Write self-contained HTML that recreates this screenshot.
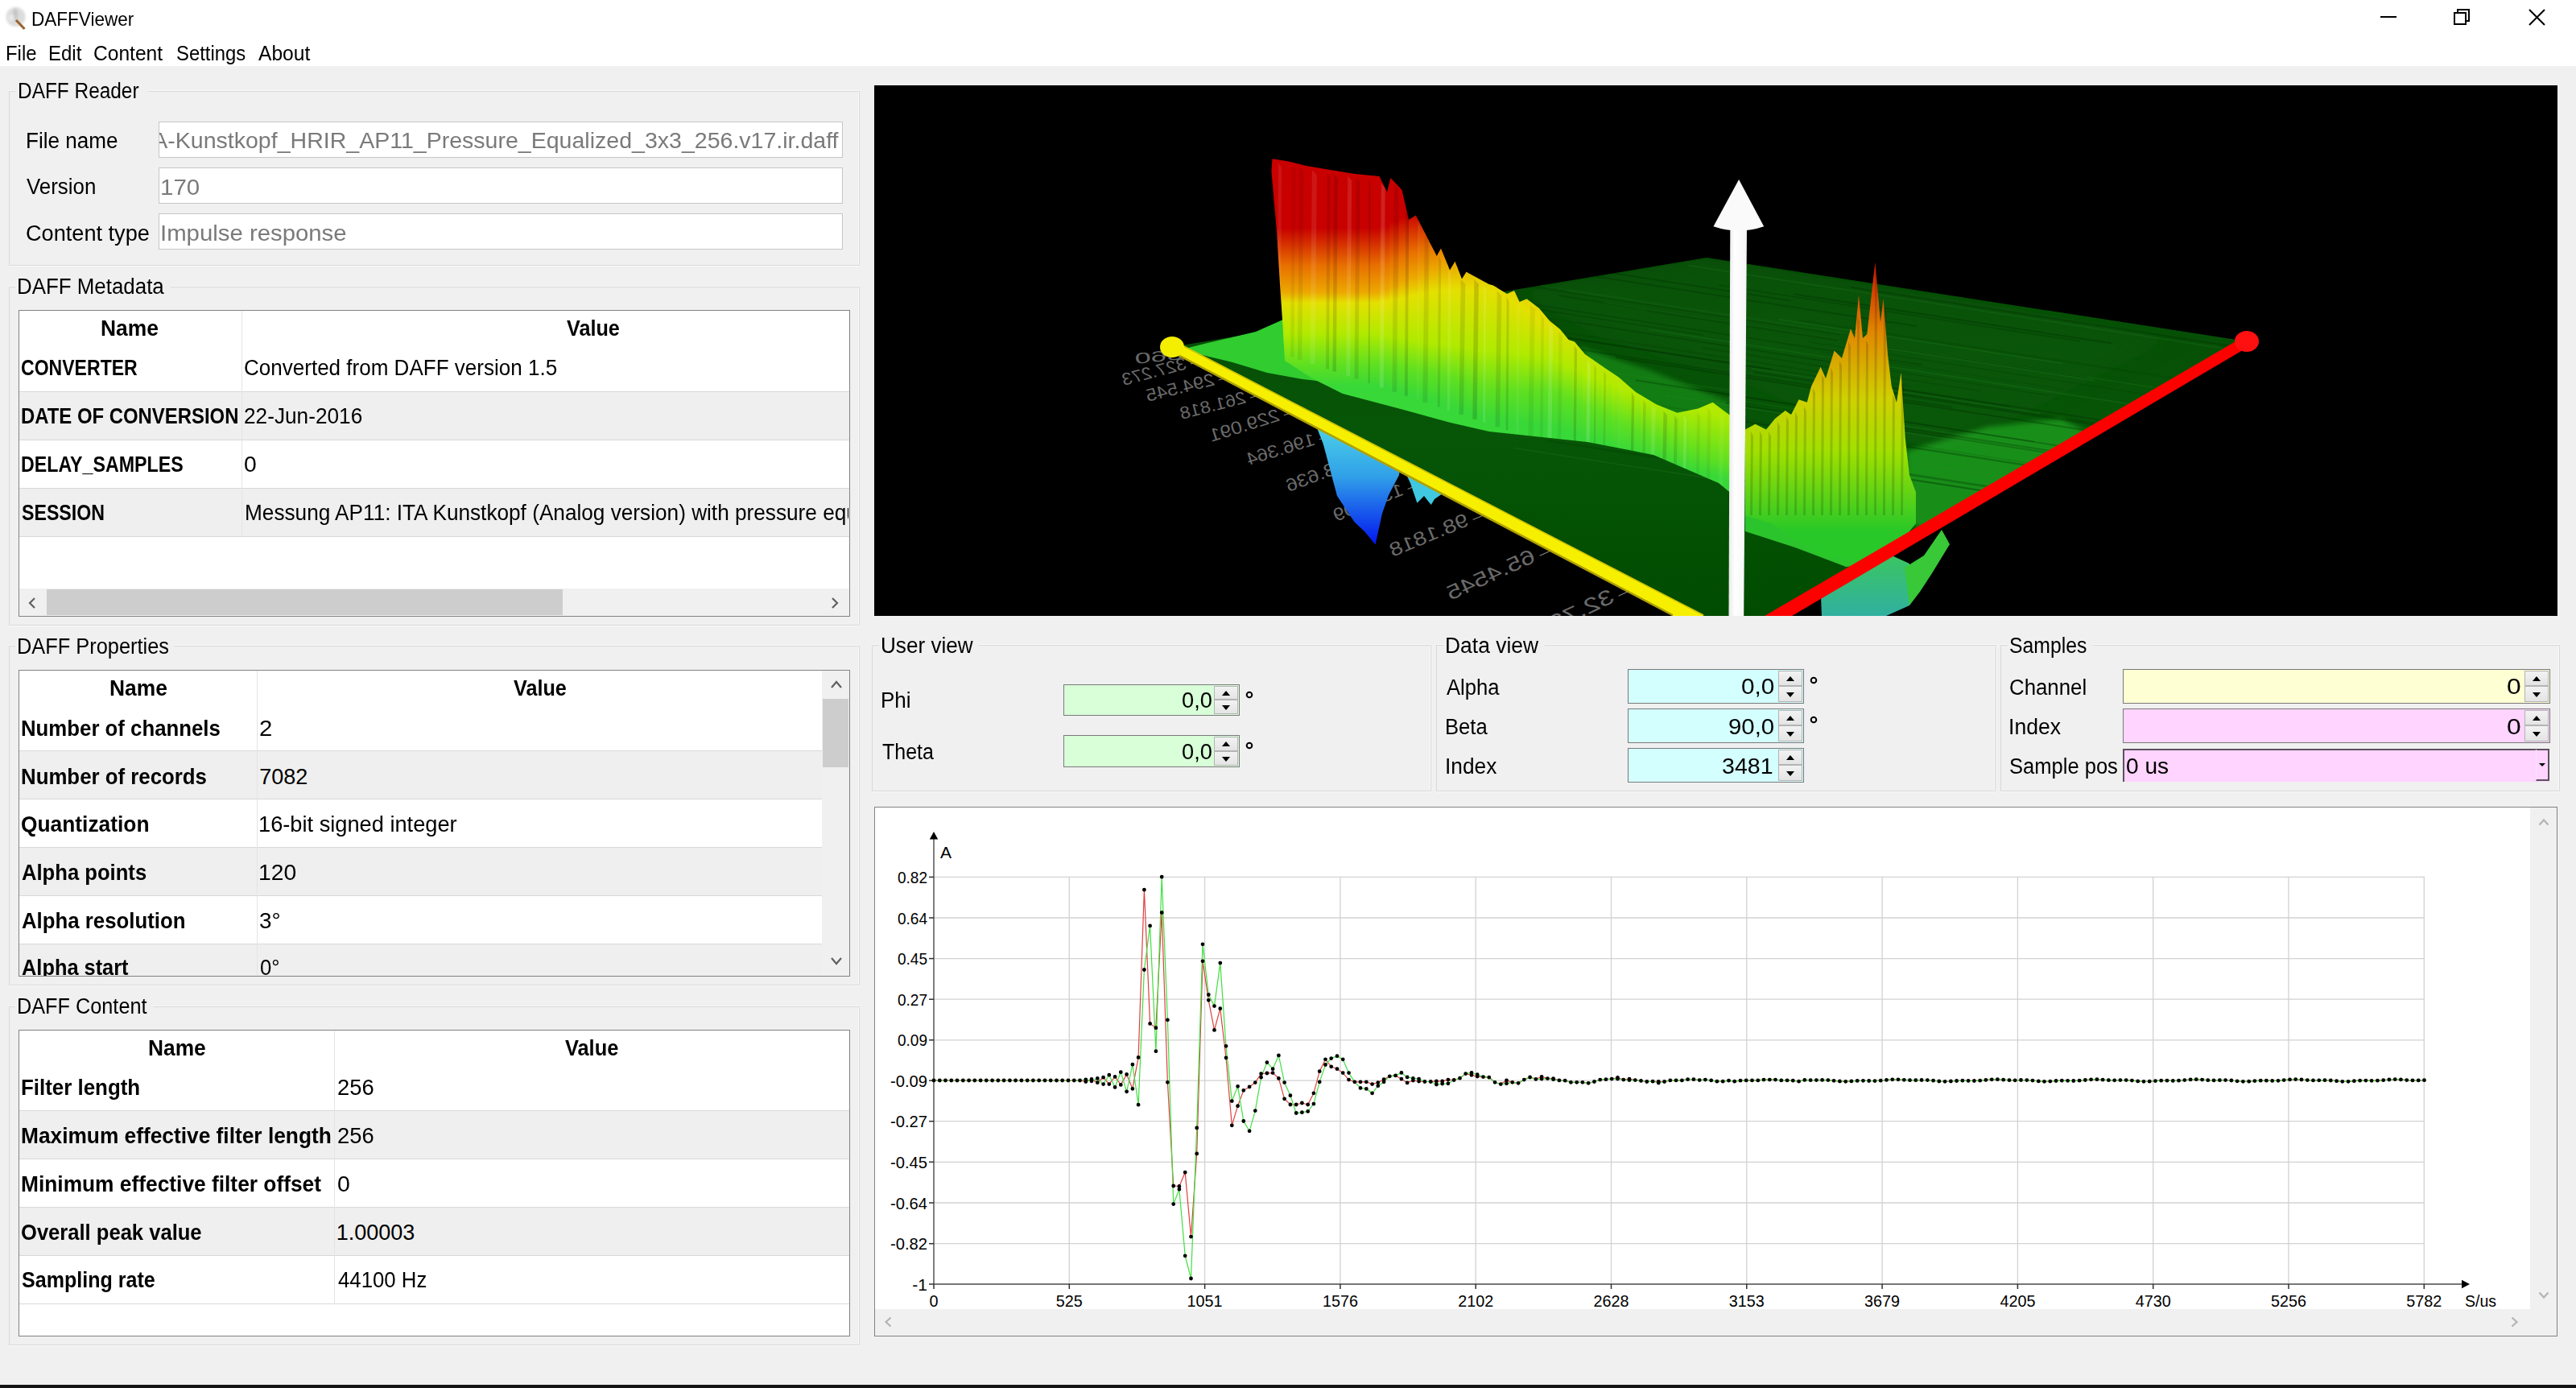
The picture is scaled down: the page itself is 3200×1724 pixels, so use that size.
<!DOCTYPE html>
<html><head><meta charset="utf-8"><title>DAFFViewer</title><style>
*{margin:0;padding:0;box-sizing:border-box}
html,body{width:3200px;height:1724px;overflow:hidden;background:#f0f0f0}
body{position:relative;font-family:"Liberation Sans",sans-serif;color:#000}
.a{position:absolute}
.t{position:absolute;white-space:nowrap;line-height:1;transform-origin:0 0}
.gb{position:absolute;border:1px solid #d8d8d8;box-shadow:inset -1px 0 0 #fafafa, 0 -1px 0 #fafafa, 0 1px 0 #fafafa}
.tb{position:absolute;background:#fff;border:1px solid #828282}
.sep{position:absolute;background:#d8d8d8}
.gr{position:absolute;background:#efefef}
.inp{position:absolute;background:#fff;border:1px solid #c6c6c6}
.spin{position:absolute;border:1px solid #7a7a7a}
.sb{position:absolute;border:1px solid #b4b4b4;background:linear-gradient(#f2f2f2,#e4e4e4)}
</style></head>
<body>
<div class="a" style="left:0px;top:0px;width:3200px;height:82px;background:#fff"></div><svg class="a" style="left:0px;top:0px" width="44" height="44" viewBox="0 0 44 44">
<defs><filter id="icb" x="-30%" y="-30%" width="160%" height="160%"><feGaussianBlur stdDeviation="1.6"/></filter></defs>
<g filter="url(#icb)"><circle cx="19.5" cy="21" r="12" fill="#dcdcdc"/><ellipse cx="19" cy="18" rx="3" ry="8" fill="#c4c4c4"/><circle cx="14" cy="22" r="4" fill="#e8e8e8"/></g>
<line x1="20" y1="25" x2="30.5" y2="36" stroke="#9a6430" stroke-width="3.2"/>
</svg><div class="a" style="left:2957px;top:20px;width:20px;height:2px;background:#000"></div><svg class="a" style="left:3046px;top:9px" width="26" height="26" viewBox="0 0 26 26"><rect x="3" y="7" width="14" height="14" fill="none" stroke="#000" stroke-width="2"/><path d="M7 7 V3 H21 V17 H17" fill="none" stroke="#000" stroke-width="2"/></svg><svg class="a" style="left:3139px;top:9px" width="26" height="26" viewBox="0 0 26 26"><path d="M3 3 L22 22 M22 3 L3 22" stroke="#000" stroke-width="2"/></svg><div class="gb" style="left:11px;top:113px;width:1057px;height:217px;"></div><div class="a" style="left:19px;top:111px;width:165px;height:5px;background:#f0f0f0"></div><div class="gb" style="left:11px;top:356px;width:1057px;height:421px;"></div><div class="a" style="left:19px;top:354px;width:193px;height:5px;background:#f0f0f0"></div><div class="gb" style="left:11px;top:802px;width:1057px;height:422px;"></div><div class="a" style="left:19px;top:800px;width:197px;height:5px;background:#f0f0f0"></div><div class="gb" style="left:11px;top:1250px;width:1057px;height:421px;"></div><div class="a" style="left:19px;top:1248px;width:171px;height:5px;background:#f0f0f0"></div><div class="inp" style="left:197px;top:151px;width:850px;height:45px;"></div><div class="inp" style="left:197px;top:208px;width:850px;height:45px;"></div><div class="inp" style="left:197px;top:265px;width:850px;height:45px;"></div><div class="a" style="left:198px;top:152px;width:848px;height:43px;overflow:hidden">
<div class="t" style="left:-32px;top:9.3px;font-size:28px;color:#7a7a7a;transform:scaleX(1.019)">ITA-Kunstkopf_HRIR_AP11_Pressure_Equalized_3x3_256.v17.ir.daff</div></div><div class="a" style="left:23px;top:385px;width:1033px;height:381px;background:#fff"></div><div class="sep" style="left:24px;top:486px;width:1031px;height:1px;"></div><div class="gr" style="left:24px;top:487px;width:1031px;height:60px;"></div><div class="sep" style="left:24px;top:546px;width:1031px;height:1px;"></div><div class="sep" style="left:24px;top:606px;width:1031px;height:1px;"></div><div class="gr" style="left:24px;top:607px;width:1031px;height:60px;"></div><div class="sep" style="left:24px;top:666px;width:1031px;height:1px;"></div><div class="a" style="left:300px;top:386px;width:1px;height:281px;background:#e4e4e4"></div><div class="a" style="left:23px;top:385px;width:1033px;height:381px;border:1px solid #828282"></div><div class="a" style="left:301px;top:607px;width:753px;height:59px;overflow:hidden">
<div class="t" style="left:3px;top:17.1px;font-size:27px;transform:scaleX(0.97)">Messung AP11: ITA Kunstkopf (Analog version) with pressure equalization</div></div><div class="a" style="left:24px;top:731px;width:1031px;height:34px;background:#f0f0f0"></div><div class="a" style="left:58px;top:732px;width:641px;height:32px;background:#cdcdcd"></div><svg class="a" style="left:33px;top:741px" width="14" height="16" viewBox="0 0 14 16"><path d="M10 2 L4 8 L10 14" fill="none" stroke="#606060" stroke-width="2.2"/></svg><svg class="a" style="left:1030px;top:741px" width="14" height="16" viewBox="0 0 14 16"><path d="M4 2 L10 8 L4 14" fill="none" stroke="#606060" stroke-width="2.2"/></svg><div class="a" style="left:23px;top:832px;width:1033px;height:381px;background:#fff"></div><div class="sep" style="left:24px;top:932px;width:997px;height:1px;"></div><div class="gr" style="left:24px;top:933px;width:997px;height:60px;"></div><div class="sep" style="left:24px;top:992px;width:997px;height:1px;"></div><div class="sep" style="left:24px;top:1052px;width:997px;height:1px;"></div><div class="gr" style="left:24px;top:1053px;width:997px;height:60px;"></div><div class="sep" style="left:24px;top:1112px;width:997px;height:1px;"></div><div class="sep" style="left:24px;top:1172px;width:997px;height:1px;"></div><div class="gr" style="left:24px;top:1173px;width:997px;height:39px;"></div><div class="a" style="left:319px;top:833px;width:1px;height:379px;background:#e4e4e4"></div><div class="a" style="left:23px;top:832px;width:1033px;height:381px;border:1px solid #828282"></div><div class="a" style="left:24px;top:1173px;width:996px;height:39px;overflow:hidden">
<div class="t" style="left:3.3px;top:16.1px;font-size:27px;font-weight:700;transform:scaleX(0.94)">Alpha start</div>
<div class="t" style="left:298.5px;top:16.1px;font-size:27px;transform:scaleX(0.95)">0°</div></div><div class="a" style="left:1021px;top:833px;width:34px;height:379px;background:#f0f0f0"></div><div class="a" style="left:1022px;top:868px;width:32px;height:85px;background:#cdcdcd"></div><svg class="a" style="left:1031px;top:844px" width="16" height="12" viewBox="0 0 16 12"><path d="M2 10 L8 3 L14 10" fill="none" stroke="#606060" stroke-width="2.2"/></svg><svg class="a" style="left:1031px;top:1188px" width="16" height="12" viewBox="0 0 16 12"><path d="M2 2 L8 9 L14 2" fill="none" stroke="#606060" stroke-width="2.2"/></svg><div class="a" style="left:23px;top:1279px;width:1033px;height:381px;background:#fff"></div><div class="sep" style="left:24px;top:1379px;width:1031px;height:1px;"></div><div class="gr" style="left:24px;top:1380px;width:1031px;height:60px;"></div><div class="sep" style="left:24px;top:1439px;width:1031px;height:1px;"></div><div class="sep" style="left:24px;top:1499px;width:1031px;height:1px;"></div><div class="gr" style="left:24px;top:1500px;width:1031px;height:60px;"></div><div class="sep" style="left:24px;top:1559px;width:1031px;height:1px;"></div><div class="sep" style="left:24px;top:1619px;width:1031px;height:1px;"></div><div class="a" style="left:415px;top:1280px;width:1px;height:340px;background:#e4e4e4"></div><div class="a" style="left:23px;top:1279px;width:1033px;height:381px;border:1px solid #828282"></div><svg class="a" style="left:1086px;top:106px" width="2091" height="659" viewBox="1086 106 2091 659" font-family="Liberation Sans, sans-serif">
<defs>
<linearGradient id="wallg" gradientUnits="userSpaceOnUse" x1="1713" y1="200" x2="1689.2" y2="498.1">
<stop offset="0" stop-color="#c00000"/><stop offset="0.277" stop-color="#d41000"/>
<stop offset="0.333" stop-color="#e03800"/><stop offset="0.41" stop-color="#e87000"/>
<stop offset="0.543" stop-color="#e8b800"/><stop offset="0.6" stop-color="#e4dc00"/>
<stop offset="0.677" stop-color="#b4ea00"/><stop offset="0.81" stop-color="#64e018"/>
<stop offset="0.917" stop-color="#3cdc3c"/><stop offset="1" stop-color="#30d030"/>
</linearGradient>
<linearGradient id="spkg" gradientUnits="userSpaceOnUse" x1="0" y1="330" x2="0" y2="660">
<stop offset="0" stop-color="#d01800"/><stop offset="0.25" stop-color="#e08800"/>
<stop offset="0.5" stop-color="#d0d000"/><stop offset="0.7" stop-color="#a0e000"/>
<stop offset="1" stop-color="#28c828"/>
</linearGradient>
<linearGradient id="blueg" gradientUnits="userSpaceOnUse" x1="0" y1="520" x2="0" y2="680">
<stop offset="0" stop-color="#50d8e8"/><stop offset="0.45" stop-color="#30a0e8"/>
<stop offset="1" stop-color="#0010f0"/>
</linearGradient>
<linearGradient id="tealg" gradientUnits="userSpaceOnUse" x1="0" y1="650" x2="0" y2="765">
<stop offset="0" stop-color="#40d040"/><stop offset="1" stop-color="#30b0a0"/>
</linearGradient>
<linearGradient id="planeg" gradientUnits="userSpaceOnUse" x1="0" y1="320" x2="0" y2="765">
<stop offset="0" stop-color="#064a06"/><stop offset="0.5" stop-color="#075607"/><stop offset="1" stop-color="#004c00"/>
</linearGradient>
<linearGradient id="arrg" gradientUnits="userSpaceOnUse" x1="2147" y1="0" x2="2170" y2="0">
<stop offset="0" stop-color="#e8e8e8"/><stop offset="0.35" stop-color="#ffffff"/><stop offset="1" stop-color="#f4f4f4"/>
</linearGradient>
<filter id="bl" x="-20%" y="-20%" width="140%" height="140%"><feGaussianBlur stdDeviation="10"/></filter>
<filter id="bl2" x="-20%" y="-20%" width="140%" height="140%"><feGaussianBlur stdDeviation="3"/></filter>
<clipPath id="pc"><polygon points="1456,431 2120,320 2791,424 2209,765 2097,765"/></clipPath>
</defs>
<rect x="1086" y="106" width="2091" height="659" fill="#000"/>
<text transform="translate(1470,446) rotate(-5.7) scale(-1,1)" font-size="18.6" fill="#6a6a6a" textLength="60" lengthAdjust="spacingAndGlyphs">360</text>
<line x1="1474.0" y1="440.6" x2="1501.8" y2="437.8" stroke="#808080" stroke-width="1.2"/>
<text transform="translate(1475,458) rotate(-14.9) scale(-1,1)" font-size="21.2" fill="#6a6a6a" textLength="82" lengthAdjust="spacingAndGlyphs">327.273</text>
<line x1="1478.9" y1="452.0" x2="1505.9" y2="444.8" stroke="#808080" stroke-width="1.2"/>
<text transform="translate(1510,478) rotate(-14.0) scale(-1,1)" font-size="21.8" fill="#6a6a6a" textLength="87" lengthAdjust="spacingAndGlyphs">294.545</text>
<line x1="1513.9" y1="472.0" x2="1541.0" y2="465.2" stroke="#808080" stroke-width="1.2"/>
<text transform="translate(1549,500) rotate(-14.5) scale(-1,1)" font-size="21.4" fill="#6a6a6a" textLength="84" lengthAdjust="spacingAndGlyphs">261.818</text>
<line x1="1552.9" y1="494.0" x2="1580.0" y2="487.0" stroke="#808080" stroke-width="1.2"/>
<text transform="translate(1591,522) rotate(-17.4) scale(-1,1)" font-size="22.2" fill="#6a6a6a" textLength="90" lengthAdjust="spacingAndGlyphs">229.091</text>
<line x1="1594.8" y1="515.8" x2="1621.5" y2="507.4" stroke="#808080" stroke-width="1.2"/>
<text transform="translate(1635,552) rotate(-17.2) scale(-1,1)" font-size="22.0" fill="#6a6a6a" textLength="88" lengthAdjust="spacingAndGlyphs">196.364</text>
<line x1="1638.8" y1="545.8" x2="1665.6" y2="537.5" stroke="#808080" stroke-width="1.2"/>
<text transform="translate(1687,579) rotate(-20.4) scale(-1,1)" font-size="22.4" fill="#6a6a6a" textLength="92" lengthAdjust="spacingAndGlyphs">163.636</text>
<line x1="1690.7" y1="572.6" x2="1717.0" y2="562.8" stroke="#808080" stroke-width="1.2"/>
<text transform="translate(1745,614) rotate(-21.6) scale(-1,1)" font-size="22.5" fill="#6a6a6a" textLength="92" lengthAdjust="spacingAndGlyphs">130.909</text>
<line x1="1748.7" y1="607.5" x2="1774.8" y2="597.2" stroke="#808080" stroke-width="1.2"/>
<text transform="translate(1826,652) rotate(-22.6) scale(-1,1)" font-size="23.9" fill="#6a6a6a" textLength="104" lengthAdjust="spacingAndGlyphs">98.1818</text>
<line x1="1829.7" y1="645.5" x2="1855.5" y2="634.7" stroke="#808080" stroke-width="1.2"/>
<text transform="translate(1909,697) rotate(-24.6) scale(-1,1)" font-size="25.5" fill="#6a6a6a" textLength="118" lengthAdjust="spacingAndGlyphs">65.4545</text>
<line x1="1912.6" y1="690.3" x2="1938.1" y2="678.7" stroke="#808080" stroke-width="1.2"/>
<text transform="translate(2007,747) rotate(-25.3) scale(-1,1)" font-size="26.3" fill="#6a6a6a" textLength="124" lengthAdjust="spacingAndGlyphs">32.7273</text>
<line x1="2010.6" y1="740.3" x2="2035.9" y2="728.3" stroke="#808080" stroke-width="1.2"/>
<polygon points="1456.0,431.0 2120.0,320.0 2791.0,424.0 2209.0,765.0 2097.0,765.0" fill="url(#planeg)"/>
<g clip-path="url(#pc)">
<polygon points="1884.0,362.0 2120.0,321.0 2500.0,383.0 2700.0,420.0 2600.0,470.0 2420.0,560.0 2300.0,530.0 2150.0,470.0 1990.0,420.0" fill="#0a5a0a" opacity="0.5" filter="url(#bl)"/>
<polygon points="1960.0,430.0 2050.0,460.0 2150.0,500.0 2150.0,585.0 2110.0,572.0 2005.0,549.0 1969.0,440.0" fill="#1c9a1c" opacity="0.6" filter="url(#bl2)"/>
<polygon points="2368.0,560.0 2470.0,530.0 2560.0,520.0 2600.0,540.0 2450.0,640.0 2400.0,660.0 2368.0,650.0" fill="#22a822" opacity="0.7" filter="url(#bl2)"/>
<line x1="2097" y1="329.7" x2="2760" y2="432.3" stroke="#2a8a2a" stroke-width="1.8" opacity="0.19"/>
<line x1="1925" y1="334.5" x2="2381" y2="405.2" stroke="#002800" stroke-width="2.2" opacity="0.23"/>
<line x1="1980" y1="335.6" x2="2225" y2="373.6" stroke="#002800" stroke-width="2.0" opacity="0.26"/>
<line x1="2292" y1="339.3" x2="2974" y2="445.0" stroke="#002800" stroke-width="1.9" opacity="0.23"/>
<line x1="1847" y1="343.9" x2="2311" y2="415.9" stroke="#2a8a2a" stroke-width="1.3" opacity="0.11"/>
<line x1="1854" y1="348.5" x2="2286" y2="415.4" stroke="#002800" stroke-width="2.3" opacity="0.19"/>
<line x1="2135" y1="354.1" x2="2584" y2="423.8" stroke="#002800" stroke-width="1.7" opacity="0.23"/>
<line x1="2299" y1="356.7" x2="2997" y2="464.8" stroke="#002800" stroke-width="2.1" opacity="0.27"/>
<line x1="1946" y1="360.9" x2="2290" y2="414.3" stroke="#2a8a2a" stroke-width="2.1" opacity="0.11"/>
<line x1="2229" y1="365.4" x2="2623" y2="426.4" stroke="#002800" stroke-width="2.3" opacity="0.29"/>
<line x1="1936" y1="367.0" x2="2592" y2="468.5" stroke="#002800" stroke-width="2.5" opacity="0.19"/>
<line x1="1874" y1="373.4" x2="2388" y2="453.2" stroke="#002800" stroke-width="1.4" opacity="0.26"/>
<line x1="1993" y1="375.5" x2="2675" y2="481.2" stroke="#2a8a2a" stroke-width="1.2" opacity="0.25"/>
<line x1="1886" y1="380.5" x2="2116" y2="416.1" stroke="#002800" stroke-width="1.3" opacity="0.26"/>
<line x1="2046" y1="386.4" x2="2341" y2="432.1" stroke="#002800" stroke-width="1.2" opacity="0.25"/>
<line x1="1894" y1="390.9" x2="2304" y2="454.5" stroke="#002800" stroke-width="1.4" opacity="0.14"/>
<line x1="2210" y1="396.8" x2="2562" y2="451.4" stroke="#2a8a2a" stroke-width="1.3" opacity="0.28"/>
<line x1="2233" y1="397.4" x2="2754" y2="478.1" stroke="#002800" stroke-width="2.5" opacity="0.12"/>
<line x1="1959" y1="400.3" x2="2545" y2="491.2" stroke="#002800" stroke-width="1.4" opacity="0.17"/>
<line x1="1881" y1="403.4" x2="2373" y2="479.6" stroke="#002800" stroke-width="1.9" opacity="0.15"/>
<line x1="2048" y1="409.2" x2="2728" y2="514.6" stroke="#2a8a2a" stroke-width="1.9" opacity="0.20"/>
<line x1="1924" y1="416.2" x2="2201" y2="459.1" stroke="#002800" stroke-width="2.2" opacity="0.28"/>
<line x1="1927" y1="416.5" x2="2497" y2="504.8" stroke="#002800" stroke-width="1.3" opacity="0.29"/>
<line x1="2246" y1="424.7" x2="2748" y2="502.5" stroke="#002800" stroke-width="1.2" opacity="0.18"/>
<line x1="2283" y1="423.2" x2="2602" y2="472.7" stroke="#2a8a2a" stroke-width="1.4" opacity="0.24"/>
<line x1="2114" y1="431.9" x2="2461" y2="485.7" stroke="#002800" stroke-width="2.1" opacity="0.14"/>
<line x1="1945" y1="431.4" x2="2425" y2="505.8" stroke="#002800" stroke-width="1.9" opacity="0.27"/>
<line x1="2262" y1="436.7" x2="2564" y2="483.5" stroke="#002800" stroke-width="1.4" opacity="0.10"/>
<line x1="1868" y1="441.7" x2="2156" y2="486.3" stroke="#2a8a2a" stroke-width="1.9" opacity="0.17"/>
<line x1="2007" y1="443.8" x2="2652" y2="543.8" stroke="#002800" stroke-width="2.0" opacity="0.30"/>
<line x1="2109" y1="451.1" x2="2379" y2="493.0" stroke="#002800" stroke-width="1.0" opacity="0.11"/>
<line x1="2162" y1="456.5" x2="2844" y2="562.1" stroke="#002800" stroke-width="2.0" opacity="0.10"/>
<line x1="2176" y1="457.9" x2="2535" y2="513.6" stroke="#2a8a2a" stroke-width="1.1" opacity="0.30"/>
<line x1="2179" y1="462.3" x2="2829" y2="563.0" stroke="#002800" stroke-width="2.1" opacity="0.25"/>
<line x1="2261" y1="467.8" x2="2637" y2="526.0" stroke="#002800" stroke-width="2.4" opacity="0.24"/>
<line x1="2032" y1="472.2" x2="2627" y2="564.5" stroke="#002800" stroke-width="1.9" opacity="0.27"/>
<line x1="2016" y1="474.7" x2="2507" y2="550.9" stroke="#2a8a2a" stroke-width="1.1" opacity="0.22"/>
<line x1="2297" y1="478.8" x2="2937" y2="578.0" stroke="#002800" stroke-width="1.6" opacity="0.25"/>
<line x1="2107" y1="483.4" x2="2527" y2="548.6" stroke="#002800" stroke-width="1.1" opacity="0.27"/>
<line x1="1854" y1="487.5" x2="2354" y2="565.1" stroke="#002800" stroke-width="1.3" opacity="0.20"/>
<line x1="2069" y1="491.2" x2="2576" y2="569.8" stroke="#2a8a2a" stroke-width="1.4" opacity="0.28"/>
<line x1="1978" y1="491.1" x2="2518" y2="574.6" stroke="#002800" stroke-width="1.3" opacity="0.14"/>
<line x1="2144" y1="500.4" x2="2565" y2="565.7" stroke="#002800" stroke-width="1.5" opacity="0.28"/>
<line x1="1931" y1="503.0" x2="2347" y2="567.4" stroke="#002800" stroke-width="2.4" opacity="0.26"/>
<line x1="2017" y1="508.3" x2="2508" y2="584.5" stroke="#2a8a2a" stroke-width="1.2" opacity="0.16"/>
<line x1="2225" y1="510.0" x2="2849" y2="606.8" stroke="#002800" stroke-width="2.4" opacity="0.24"/>
<line x1="1918" y1="512.7" x2="2343" y2="578.6" stroke="#002800" stroke-width="1.3" opacity="0.16"/>
<line x1="2128" y1="517.5" x2="2575" y2="586.8" stroke="#002800" stroke-width="2.3" opacity="0.16"/>
<line x1="2048" y1="524.9" x2="2285" y2="561.7" stroke="#2a8a2a" stroke-width="2.3" opacity="0.11"/>
<line x1="2166" y1="523.2" x2="2651" y2="598.5" stroke="#002800" stroke-width="2.2" opacity="0.16"/>
<line x1="1903" y1="527.1" x2="2330" y2="593.4" stroke="#002800" stroke-width="2.2" opacity="0.10"/>
<line x1="1905" y1="532.4" x2="2128" y2="567.1" stroke="#002800" stroke-width="1.7" opacity="0.23"/>
<line x1="2141" y1="538.8" x2="2745" y2="632.4" stroke="#2a8a2a" stroke-width="2.0" opacity="0.29"/>
<line x1="2059" y1="540.2" x2="2348" y2="585.0" stroke="#002800" stroke-width="1.7" opacity="0.10"/>
<line x1="1922" y1="547.3" x2="2259" y2="599.4" stroke="#002800" stroke-width="2.0" opacity="0.17"/>
<line x1="2123" y1="550.1" x2="2701" y2="639.7" stroke="#002800" stroke-width="2.2" opacity="0.18"/>
<line x1="1880" y1="556.4" x2="2546" y2="659.7" stroke="#2a8a2a" stroke-width="1.2" opacity="0.24"/>
<line x1="2128" y1="557.7" x2="2783" y2="659.2" stroke="#002800" stroke-width="1.9" opacity="0.18"/>
<line x1="2207" y1="564.3" x2="2879" y2="668.5" stroke="#002800" stroke-width="2.0" opacity="0.19"/>
<line x1="2172" y1="564.2" x2="2781" y2="658.7" stroke="#002800" stroke-width="2.1" opacity="0.23"/>
</g>
<polygon points="2168.0,605.0 2220.0,600.0 2300.0,598.0 2368.0,600.0 2380.0,640.0 2340.0,700.0 2293.0,704.0 2230.0,680.0 2168.0,660.0" fill="#2cc42c"/>
<polygon points="1468.0,434.0 1500.0,426.0 1560.0,412.0 1596.0,396.0 1610.0,440.0 1645.0,474.0 1618.0,471.0 1574.0,463.0 1531.0,450.0 1481.0,438.0" fill="#30cc30"/>
<clipPath id="wallclip"><polygon points="1580.5,197.3 1601.0,200.5 1622.7,206.0 1681.0,215.7 1713.5,219.0 1723.0,238.4 1727.5,221.0 1741.5,236.0 1750.0,273.0 1758.8,267.5 1784.8,318.0 1790.0,308.6 1801.0,335.6 1807.5,324.8 1816.0,346.5 1821.5,337.8 1849.6,353.0 1855.0,354.5 1872.0,365.0 1881.0,361.0 1887.6,375.0 1896.7,371.3 1912.0,383.0 1925.0,398.6 1938.0,409.0 1948.6,422.0 1956.0,424.5 1969.0,440.0 1995.0,458.0 2010.8,468.6 2031.6,486.8 2057.5,502.3 2083.5,512.7 2109.4,507.5 2127.6,499.7 2148.3,515.3 2152.0,520.0 2152.0,614.0 2135.0,600.0 2054.0,565.0 1972.0,549.0 1850.0,536.0 1802.0,525.0 1740.0,508.0 1668.0,489.0 1630.0,470.0 1596.0,448.0 1593.5,404.8 1590.0,353.0 1586.0,288.0 1579.4,212.4"/></clipPath>
<g clip-path="url(#wallclip)">
<linearGradient id="ws0" gradientUnits="userSpaceOnUse" x1="0" y1="180" x2="0" y2="620"><stop offset="0.2341" stop-color="#c80000"/><stop offset="0.3409" stop-color="#e87000"/><stop offset="0.4159" stop-color="#eca800"/><stop offset="0.4455" stop-color="#e4e000"/><stop offset="0.5341" stop-color="#b0ea00"/><stop offset="0.6182" stop-color="#60e020"/><stop offset="0.6818" stop-color="#38d838"/></linearGradient>
<rect x="1570" y="180" width="12.6" height="440" fill="url(#ws0)"/>
<linearGradient id="ws1" gradientUnits="userSpaceOnUse" x1="0" y1="180" x2="0" y2="620"><stop offset="0.2341" stop-color="#c80000"/><stop offset="0.3409" stop-color="#e87000"/><stop offset="0.4159" stop-color="#eca800"/><stop offset="0.4455" stop-color="#e4e000"/><stop offset="0.5341" stop-color="#b0ea00"/><stop offset="0.6182" stop-color="#60e020"/><stop offset="0.6818" stop-color="#38d838"/></linearGradient>
<rect x="1582" y="180" width="12.6" height="440" fill="url(#ws1)"/>
<linearGradient id="ws2" gradientUnits="userSpaceOnUse" x1="0" y1="180" x2="0" y2="620"><stop offset="0.2341" stop-color="#c80000"/><stop offset="0.3409" stop-color="#e87000"/><stop offset="0.4159" stop-color="#eca800"/><stop offset="0.4455" stop-color="#e4e000"/><stop offset="0.5341" stop-color="#b0ea00"/><stop offset="0.6182" stop-color="#60e020"/><stop offset="0.6818" stop-color="#38d838"/></linearGradient>
<rect x="1594" y="180" width="12.6" height="440" fill="url(#ws2)"/>
<linearGradient id="ws3" gradientUnits="userSpaceOnUse" x1="0" y1="180" x2="0" y2="620"><stop offset="0.2341" stop-color="#c80000"/><stop offset="0.3409" stop-color="#e87000"/><stop offset="0.4159" stop-color="#eca800"/><stop offset="0.4455" stop-color="#e4e000"/><stop offset="0.5341" stop-color="#b0ea00"/><stop offset="0.6182" stop-color="#60e020"/><stop offset="0.6818" stop-color="#38d838"/></linearGradient>
<rect x="1606" y="180" width="12.6" height="440" fill="url(#ws3)"/>
<linearGradient id="ws4" gradientUnits="userSpaceOnUse" x1="0" y1="180" x2="0" y2="620"><stop offset="0.2341" stop-color="#c80000"/><stop offset="0.3409" stop-color="#e87000"/><stop offset="0.4159" stop-color="#eca800"/><stop offset="0.4455" stop-color="#e4e000"/><stop offset="0.5341" stop-color="#b0ea00"/><stop offset="0.6182" stop-color="#60e020"/><stop offset="0.6818" stop-color="#38d838"/></linearGradient>
<rect x="1618" y="180" width="12.6" height="440" fill="url(#ws4)"/>
<linearGradient id="ws5" gradientUnits="userSpaceOnUse" x1="0" y1="180" x2="0" y2="620"><stop offset="0.2341" stop-color="#c80000"/><stop offset="0.3409" stop-color="#e87000"/><stop offset="0.4159" stop-color="#eca800"/><stop offset="0.4455" stop-color="#e4e000"/><stop offset="0.5341" stop-color="#b0ea00"/><stop offset="0.6182" stop-color="#60e020"/><stop offset="0.6818" stop-color="#38d838"/></linearGradient>
<rect x="1630" y="180" width="12.6" height="440" fill="url(#ws5)"/>
<linearGradient id="ws6" gradientUnits="userSpaceOnUse" x1="0" y1="180" x2="0" y2="620"><stop offset="0.2341" stop-color="#c80000"/><stop offset="0.3409" stop-color="#e87000"/><stop offset="0.4159" stop-color="#eca800"/><stop offset="0.4455" stop-color="#e4e000"/><stop offset="0.5341" stop-color="#b0ea00"/><stop offset="0.6182" stop-color="#60e020"/><stop offset="0.6818" stop-color="#38d838"/></linearGradient>
<rect x="1642" y="180" width="12.6" height="440" fill="url(#ws6)"/>
<linearGradient id="ws7" gradientUnits="userSpaceOnUse" x1="0" y1="180" x2="0" y2="620"><stop offset="0.2341" stop-color="#c80000"/><stop offset="0.3409" stop-color="#e87000"/><stop offset="0.4159" stop-color="#eca800"/><stop offset="0.4455" stop-color="#e4e000"/><stop offset="0.5341" stop-color="#b0ea00"/><stop offset="0.6182" stop-color="#60e020"/><stop offset="0.6818" stop-color="#38d838"/></linearGradient>
<rect x="1654" y="180" width="12.6" height="440" fill="url(#ws7)"/>
<linearGradient id="ws8" gradientUnits="userSpaceOnUse" x1="0" y1="180" x2="0" y2="620"><stop offset="0.2341" stop-color="#c80000"/><stop offset="0.3409" stop-color="#e87000"/><stop offset="0.4159" stop-color="#eca800"/><stop offset="0.4455" stop-color="#e4e000"/><stop offset="0.5341" stop-color="#b0ea00"/><stop offset="0.6182" stop-color="#60e020"/><stop offset="0.6818" stop-color="#38d838"/></linearGradient>
<rect x="1666" y="180" width="12.6" height="440" fill="url(#ws8)"/>
<linearGradient id="ws9" gradientUnits="userSpaceOnUse" x1="0" y1="180" x2="0" y2="620"><stop offset="0.2341" stop-color="#c80000"/><stop offset="0.3409" stop-color="#e87000"/><stop offset="0.4159" stop-color="#eca800"/><stop offset="0.4455" stop-color="#e4e000"/><stop offset="0.5341" stop-color="#b0ea00"/><stop offset="0.6182" stop-color="#60e020"/><stop offset="0.6818" stop-color="#38d838"/></linearGradient>
<rect x="1678" y="180" width="12.6" height="440" fill="url(#ws9)"/>
<linearGradient id="ws10" gradientUnits="userSpaceOnUse" x1="0" y1="180" x2="0" y2="620"><stop offset="0.2341" stop-color="#c80000"/><stop offset="0.3409" stop-color="#e87000"/><stop offset="0.4159" stop-color="#eca800"/><stop offset="0.4455" stop-color="#e4e000"/><stop offset="0.5341" stop-color="#b0ea00"/><stop offset="0.6182" stop-color="#60e020"/><stop offset="0.6818" stop-color="#38d838"/></linearGradient>
<rect x="1690" y="180" width="12.6" height="440" fill="url(#ws10)"/>
<linearGradient id="ws11" gradientUnits="userSpaceOnUse" x1="0" y1="180" x2="0" y2="620"><stop offset="0.2341" stop-color="#c80000"/><stop offset="0.3409" stop-color="#e87000"/><stop offset="0.4159" stop-color="#eca800"/><stop offset="0.4455" stop-color="#e4e000"/><stop offset="0.5341" stop-color="#b0ea00"/><stop offset="0.6182" stop-color="#60e020"/><stop offset="0.6818" stop-color="#38d838"/></linearGradient>
<rect x="1702" y="180" width="12.6" height="440" fill="url(#ws11)"/>
<linearGradient id="ws12" gradientUnits="userSpaceOnUse" x1="0" y1="180" x2="0" y2="620"><stop offset="0.2273" stop-color="#c80000"/><stop offset="0.3347" stop-color="#e87000"/><stop offset="0.4091" stop-color="#eca800"/><stop offset="0.4421" stop-color="#e4e000"/><stop offset="0.5368" stop-color="#b0ea00"/><stop offset="0.6209" stop-color="#60e020"/><stop offset="0.6860" stop-color="#38d838"/></linearGradient>
<rect x="1714" y="180" width="12.6" height="440" fill="url(#ws12)"/>
<linearGradient id="ws13" gradientUnits="userSpaceOnUse" x1="0" y1="180" x2="0" y2="620"><stop offset="0.2156" stop-color="#c80000"/><stop offset="0.3241" stop-color="#e87000"/><stop offset="0.3974" stop-color="#eca800"/><stop offset="0.4365" stop-color="#e4e000"/><stop offset="0.5414" stop-color="#b0ea00"/><stop offset="0.6255" stop-color="#60e020"/><stop offset="0.6930" stop-color="#38d838"/></linearGradient>
<rect x="1726" y="180" width="12.6" height="440" fill="url(#ws13)"/>
<linearGradient id="ws14" gradientUnits="userSpaceOnUse" x1="0" y1="180" x2="0" y2="620"><stop offset="0.2039" stop-color="#c80000"/><stop offset="0.3135" stop-color="#e87000"/><stop offset="0.3857" stop-color="#eca800"/><stop offset="0.4308" stop-color="#e4e000"/><stop offset="0.5460" stop-color="#b0ea00"/><stop offset="0.6301" stop-color="#60e020"/><stop offset="0.7001" stop-color="#38d838"/></linearGradient>
<rect x="1738" y="180" width="12.6" height="440" fill="url(#ws14)"/>
<linearGradient id="ws15" gradientUnits="userSpaceOnUse" x1="0" y1="180" x2="0" y2="620"><stop offset="0.1922" stop-color="#c80000"/><stop offset="0.3028" stop-color="#e87000"/><stop offset="0.3740" stop-color="#eca800"/><stop offset="0.4251" stop-color="#e4e000"/><stop offset="0.5506" stop-color="#b0ea00"/><stop offset="0.6347" stop-color="#60e020"/><stop offset="0.7072" stop-color="#38d838"/></linearGradient>
<rect x="1750" y="180" width="12.6" height="440" fill="url(#ws15)"/>
<linearGradient id="ws16" gradientUnits="userSpaceOnUse" x1="0" y1="180" x2="0" y2="620"><stop offset="0.1805" stop-color="#c80000"/><stop offset="0.2922" stop-color="#e87000"/><stop offset="0.3623" stop-color="#eca800"/><stop offset="0.4195" stop-color="#e4e000"/><stop offset="0.5552" stop-color="#b0ea00"/><stop offset="0.6393" stop-color="#60e020"/><stop offset="0.7143" stop-color="#38d838"/></linearGradient>
<rect x="1762" y="180" width="12.6" height="440" fill="url(#ws16)"/>
<linearGradient id="ws17" gradientUnits="userSpaceOnUse" x1="0" y1="180" x2="0" y2="620"><stop offset="0.1688" stop-color="#c80000"/><stop offset="0.2816" stop-color="#e87000"/><stop offset="0.3506" stop-color="#eca800"/><stop offset="0.4138" stop-color="#e4e000"/><stop offset="0.5598" stop-color="#b0ea00"/><stop offset="0.6439" stop-color="#60e020"/><stop offset="0.7214" stop-color="#38d838"/></linearGradient>
<rect x="1774" y="180" width="12.6" height="440" fill="url(#ws17)"/>
<linearGradient id="ws18" gradientUnits="userSpaceOnUse" x1="0" y1="180" x2="0" y2="620"><stop offset="0.1553" stop-color="#c80000"/><stop offset="0.2712" stop-color="#e87000"/><stop offset="0.3402" stop-color="#eca800"/><stop offset="0.4091" stop-color="#e4e000"/><stop offset="0.5642" stop-color="#b0ea00"/><stop offset="0.6492" stop-color="#60e020"/><stop offset="0.7288" stop-color="#38d838"/></linearGradient>
<rect x="1786" y="180" width="12.6" height="440" fill="url(#ws18)"/>
<linearGradient id="ws19" gradientUnits="userSpaceOnUse" x1="0" y1="180" x2="0" y2="620"><stop offset="0.1326" stop-color="#c80000"/><stop offset="0.2621" stop-color="#e87000"/><stop offset="0.3356" stop-color="#eca800"/><stop offset="0.4091" stop-color="#e4e000"/><stop offset="0.5673" stop-color="#b0ea00"/><stop offset="0.6578" stop-color="#60e020"/><stop offset="0.7379" stop-color="#38d838"/></linearGradient>
<rect x="1798" y="180" width="12.6" height="440" fill="url(#ws19)"/>
<linearGradient id="ws20" gradientUnits="userSpaceOnUse" x1="0" y1="180" x2="0" y2="620"><stop offset="0.1098" stop-color="#c80000"/><stop offset="0.2530" stop-color="#e87000"/><stop offset="0.3311" stop-color="#eca800"/><stop offset="0.4091" stop-color="#e4e000"/><stop offset="0.5705" stop-color="#b0ea00"/><stop offset="0.6664" stop-color="#60e020"/><stop offset="0.7470" stop-color="#38d838"/></linearGradient>
<rect x="1810" y="180" width="12.6" height="440" fill="url(#ws20)"/>
<linearGradient id="ws21" gradientUnits="userSpaceOnUse" x1="0" y1="180" x2="0" y2="620"><stop offset="0.0871" stop-color="#c80000"/><stop offset="0.2439" stop-color="#e87000"/><stop offset="0.3265" stop-color="#eca800"/><stop offset="0.4091" stop-color="#e4e000"/><stop offset="0.5737" stop-color="#b0ea00"/><stop offset="0.6751" stop-color="#60e020"/><stop offset="0.7561" stop-color="#38d838"/></linearGradient>
<rect x="1822" y="180" width="12.6" height="440" fill="url(#ws21)"/>
<linearGradient id="ws22" gradientUnits="userSpaceOnUse" x1="0" y1="180" x2="0" y2="620"><stop offset="0.0644" stop-color="#c80000"/><stop offset="0.2348" stop-color="#e87000"/><stop offset="0.3220" stop-color="#eca800"/><stop offset="0.4091" stop-color="#e4e000"/><stop offset="0.5769" stop-color="#b0ea00"/><stop offset="0.6837" stop-color="#60e020"/><stop offset="0.7652" stop-color="#38d838"/></linearGradient>
<rect x="1834" y="180" width="12.6" height="440" fill="url(#ws22)"/>
<linearGradient id="ws23" gradientUnits="userSpaceOnUse" x1="0" y1="180" x2="0" y2="620"><stop offset="0.0455" stop-color="#c80000"/><stop offset="0.2255" stop-color="#e87000"/><stop offset="0.3170" stop-color="#eca800"/><stop offset="0.4115" stop-color="#e4e000"/><stop offset="0.5801" stop-color="#b0ea00"/><stop offset="0.6910" stop-color="#60e020"/><stop offset="0.7733" stop-color="#38d838"/></linearGradient>
<rect x="1846" y="180" width="12.6" height="440" fill="url(#ws23)"/>
<linearGradient id="ws24" gradientUnits="userSpaceOnUse" x1="0" y1="180" x2="0" y2="620"><stop offset="0.0455" stop-color="#c80000"/><stop offset="0.2147" stop-color="#e87000"/><stop offset="0.3098" stop-color="#eca800"/><stop offset="0.4258" stop-color="#e4e000"/><stop offset="0.5837" stop-color="#b0ea00"/><stop offset="0.6913" stop-color="#60e020"/><stop offset="0.7769" stop-color="#38d838"/></linearGradient>
<rect x="1858" y="180" width="12.6" height="440" fill="url(#ws24)"/>
<linearGradient id="ws25" gradientUnits="userSpaceOnUse" x1="0" y1="180" x2="0" y2="620"><stop offset="0.0455" stop-color="#c80000"/><stop offset="0.2039" stop-color="#e87000"/><stop offset="0.3026" stop-color="#eca800"/><stop offset="0.4402" stop-color="#e4e000"/><stop offset="0.5873" stop-color="#b0ea00"/><stop offset="0.6917" stop-color="#60e020"/><stop offset="0.7805" stop-color="#38d838"/></linearGradient>
<rect x="1870" y="180" width="12.6" height="440" fill="url(#ws25)"/>
<linearGradient id="ws26" gradientUnits="userSpaceOnUse" x1="0" y1="180" x2="0" y2="620"><stop offset="0.0455" stop-color="#c80000"/><stop offset="0.1932" stop-color="#e87000"/><stop offset="0.2955" stop-color="#eca800"/><stop offset="0.4545" stop-color="#e4e000"/><stop offset="0.5909" stop-color="#b0ea00"/><stop offset="0.6920" stop-color="#60e020"/><stop offset="0.7841" stop-color="#38d838"/></linearGradient>
<rect x="1882" y="180" width="12.6" height="440" fill="url(#ws26)"/>
<linearGradient id="ws27" gradientUnits="userSpaceOnUse" x1="0" y1="180" x2="0" y2="620"><stop offset="0.0455" stop-color="#c80000"/><stop offset="0.1824" stop-color="#e87000"/><stop offset="0.2883" stop-color="#eca800"/><stop offset="0.4689" stop-color="#e4e000"/><stop offset="0.5945" stop-color="#b0ea00"/><stop offset="0.6924" stop-color="#60e020"/><stop offset="0.7877" stop-color="#38d838"/></linearGradient>
<rect x="1894" y="180" width="12.6" height="440" fill="url(#ws27)"/>
<linearGradient id="ws28" gradientUnits="userSpaceOnUse" x1="0" y1="180" x2="0" y2="620"><stop offset="0.0455" stop-color="#c80000"/><stop offset="0.1717" stop-color="#e87000"/><stop offset="0.2811" stop-color="#eca800"/><stop offset="0.4833" stop-color="#e4e000"/><stop offset="0.5981" stop-color="#b0ea00"/><stop offset="0.6928" stop-color="#60e020"/><stop offset="0.7913" stop-color="#38d838"/></linearGradient>
<rect x="1906" y="180" width="12.6" height="440" fill="url(#ws28)"/>
<linearGradient id="ws29" gradientUnits="userSpaceOnUse" x1="0" y1="180" x2="0" y2="620"><stop offset="0.0455" stop-color="#c80000"/><stop offset="0.1609" stop-color="#e87000"/><stop offset="0.2739" stop-color="#eca800"/><stop offset="0.4976" stop-color="#e4e000"/><stop offset="0.6017" stop-color="#b0ea00"/><stop offset="0.6931" stop-color="#60e020"/><stop offset="0.7949" stop-color="#38d838"/></linearGradient>
<rect x="1918" y="180" width="12.6" height="440" fill="url(#ws29)"/>
<linearGradient id="ws30" gradientUnits="userSpaceOnUse" x1="0" y1="180" x2="0" y2="620"><stop offset="0.0455" stop-color="#c80000"/><stop offset="0.1554" stop-color="#e87000"/><stop offset="0.2691" stop-color="#eca800"/><stop offset="0.5037" stop-color="#e4e000"/><stop offset="0.6124" stop-color="#b0ea00"/><stop offset="0.7033" stop-color="#60e020"/><stop offset="0.8028" stop-color="#38d838"/></linearGradient>
<rect x="1930" y="180" width="12.6" height="440" fill="url(#ws30)"/>
<linearGradient id="ws31" gradientUnits="userSpaceOnUse" x1="0" y1="180" x2="0" y2="620"><stop offset="0.0455" stop-color="#c80000"/><stop offset="0.1510" stop-color="#e87000"/><stop offset="0.2647" stop-color="#eca800"/><stop offset="0.5081" stop-color="#e4e000"/><stop offset="0.6245" stop-color="#b0ea00"/><stop offset="0.7154" stop-color="#60e020"/><stop offset="0.8116" stop-color="#38d838"/></linearGradient>
<rect x="1942" y="180" width="12.6" height="440" fill="url(#ws31)"/>
<linearGradient id="ws32" gradientUnits="userSpaceOnUse" x1="0" y1="180" x2="0" y2="620"><stop offset="0.0455" stop-color="#c80000"/><stop offset="0.1466" stop-color="#e87000"/><stop offset="0.2603" stop-color="#eca800"/><stop offset="0.5125" stop-color="#e4e000"/><stop offset="0.6365" stop-color="#b0ea00"/><stop offset="0.7275" stop-color="#60e020"/><stop offset="0.8204" stop-color="#38d838"/></linearGradient>
<rect x="1954" y="180" width="12.6" height="440" fill="url(#ws32)"/>
<linearGradient id="ws33" gradientUnits="userSpaceOnUse" x1="0" y1="180" x2="0" y2="620"><stop offset="0.0455" stop-color="#c80000"/><stop offset="0.1422" stop-color="#e87000"/><stop offset="0.2559" stop-color="#eca800"/><stop offset="0.5169" stop-color="#e4e000"/><stop offset="0.6486" stop-color="#b0ea00"/><stop offset="0.7396" stop-color="#60e020"/><stop offset="0.8292" stop-color="#38d838"/></linearGradient>
<rect x="1966" y="180" width="12.6" height="440" fill="url(#ws33)"/>
<linearGradient id="ws34" gradientUnits="userSpaceOnUse" x1="0" y1="180" x2="0" y2="620"><stop offset="0.0455" stop-color="#c80000"/><stop offset="0.1378" stop-color="#e87000"/><stop offset="0.2515" stop-color="#eca800"/><stop offset="0.5213" stop-color="#e4e000"/><stop offset="0.6607" stop-color="#b0ea00"/><stop offset="0.7516" stop-color="#60e020"/><stop offset="0.8380" stop-color="#38d838"/></linearGradient>
<rect x="1978" y="180" width="12.6" height="440" fill="url(#ws34)"/>
<linearGradient id="ws35" gradientUnits="userSpaceOnUse" x1="0" y1="180" x2="0" y2="620"><stop offset="0.0455" stop-color="#c80000"/><stop offset="0.1334" stop-color="#e87000"/><stop offset="0.2471" stop-color="#eca800"/><stop offset="0.5257" stop-color="#e4e000"/><stop offset="0.6728" stop-color="#b0ea00"/><stop offset="0.7637" stop-color="#60e020"/><stop offset="0.8468" stop-color="#38d838"/></linearGradient>
<rect x="1990" y="180" width="12.6" height="440" fill="url(#ws35)"/>
<linearGradient id="ws36" gradientUnits="userSpaceOnUse" x1="0" y1="180" x2="0" y2="620"><stop offset="0.0455" stop-color="#c80000"/><stop offset="0.1290" stop-color="#e87000"/><stop offset="0.2427" stop-color="#eca800"/><stop offset="0.5301" stop-color="#e4e000"/><stop offset="0.6849" stop-color="#b0ea00"/><stop offset="0.7758" stop-color="#60e020"/><stop offset="0.8556" stop-color="#38d838"/></linearGradient>
<rect x="2002" y="180" width="12.6" height="440" fill="url(#ws36)"/>
<linearGradient id="ws37" gradientUnits="userSpaceOnUse" x1="0" y1="180" x2="0" y2="620"><stop offset="0.0455" stop-color="#c80000"/><stop offset="0.1246" stop-color="#e87000"/><stop offset="0.2383" stop-color="#eca800"/><stop offset="0.5345" stop-color="#e4e000"/><stop offset="0.6970" stop-color="#b0ea00"/><stop offset="0.7879" stop-color="#60e020"/><stop offset="0.8644" stop-color="#38d838"/></linearGradient>
<rect x="2014" y="180" width="12.6" height="440" fill="url(#ws37)"/>
<linearGradient id="ws38" gradientUnits="userSpaceOnUse" x1="0" y1="180" x2="0" y2="620"><stop offset="0.0455" stop-color="#c80000"/><stop offset="0.1202" stop-color="#e87000"/><stop offset="0.2339" stop-color="#eca800"/><stop offset="0.5389" stop-color="#e4e000"/><stop offset="0.7091" stop-color="#b0ea00"/><stop offset="0.8000" stop-color="#60e020"/><stop offset="0.8732" stop-color="#38d838"/></linearGradient>
<rect x="2026" y="180" width="12.6" height="440" fill="url(#ws38)"/>
<linearGradient id="ws39" gradientUnits="userSpaceOnUse" x1="0" y1="180" x2="0" y2="620"><stop offset="0.0455" stop-color="#c80000"/><stop offset="0.1158" stop-color="#e87000"/><stop offset="0.2295" stop-color="#eca800"/><stop offset="0.5433" stop-color="#e4e000"/><stop offset="0.7212" stop-color="#b0ea00"/><stop offset="0.8121" stop-color="#60e020"/><stop offset="0.8820" stop-color="#38d838"/></linearGradient>
<rect x="2038" y="180" width="12.6" height="440" fill="url(#ws39)"/>
<linearGradient id="ws40" gradientUnits="userSpaceOnUse" x1="0" y1="180" x2="0" y2="620"><stop offset="0.0455" stop-color="#c80000"/><stop offset="0.1124" stop-color="#e87000"/><stop offset="0.2260" stop-color="#eca800"/><stop offset="0.5467" stop-color="#e4e000"/><stop offset="0.7298" stop-color="#b0ea00"/><stop offset="0.8231" stop-color="#60e020"/><stop offset="0.8901" stop-color="#38d838"/></linearGradient>
<rect x="2050" y="180" width="12.6" height="440" fill="url(#ws40)"/>
<linearGradient id="ws41" gradientUnits="userSpaceOnUse" x1="0" y1="180" x2="0" y2="620"><stop offset="0.0455" stop-color="#c80000"/><stop offset="0.1099" stop-color="#e87000"/><stop offset="0.2236" stop-color="#eca800"/><stop offset="0.5492" stop-color="#e4e000"/><stop offset="0.7347" stop-color="#b0ea00"/><stop offset="0.8331" stop-color="#60e020"/><stop offset="0.8975" stop-color="#38d838"/></linearGradient>
<rect x="2062" y="180" width="12.6" height="440" fill="url(#ws41)"/>
<linearGradient id="ws42" gradientUnits="userSpaceOnUse" x1="0" y1="180" x2="0" y2="620"><stop offset="0.0455" stop-color="#c80000"/><stop offset="0.1074" stop-color="#e87000"/><stop offset="0.2211" stop-color="#eca800"/><stop offset="0.5517" stop-color="#e4e000"/><stop offset="0.7397" stop-color="#b0ea00"/><stop offset="0.8430" stop-color="#60e020"/><stop offset="0.9050" stop-color="#38d838"/></linearGradient>
<rect x="2074" y="180" width="12.6" height="440" fill="url(#ws42)"/>
<linearGradient id="ws43" gradientUnits="userSpaceOnUse" x1="0" y1="180" x2="0" y2="620"><stop offset="0.0455" stop-color="#c80000"/><stop offset="0.1050" stop-color="#e87000"/><stop offset="0.2186" stop-color="#eca800"/><stop offset="0.5541" stop-color="#e4e000"/><stop offset="0.7446" stop-color="#b0ea00"/><stop offset="0.8529" stop-color="#60e020"/><stop offset="0.9124" stop-color="#38d838"/></linearGradient>
<rect x="2086" y="180" width="12.6" height="440" fill="url(#ws43)"/>
<linearGradient id="ws44" gradientUnits="userSpaceOnUse" x1="0" y1="180" x2="0" y2="620"><stop offset="0.0455" stop-color="#c80000"/><stop offset="0.1025" stop-color="#e87000"/><stop offset="0.2161" stop-color="#eca800"/><stop offset="0.5566" stop-color="#e4e000"/><stop offset="0.7496" stop-color="#b0ea00"/><stop offset="0.8628" stop-color="#60e020"/><stop offset="0.9198" stop-color="#38d838"/></linearGradient>
<rect x="2098" y="180" width="12.6" height="440" fill="url(#ws44)"/>
<linearGradient id="ws45" gradientUnits="userSpaceOnUse" x1="0" y1="180" x2="0" y2="620"><stop offset="0.0455" stop-color="#c80000"/><stop offset="0.1000" stop-color="#e87000"/><stop offset="0.2136" stop-color="#eca800"/><stop offset="0.5591" stop-color="#e4e000"/><stop offset="0.7545" stop-color="#b0ea00"/><stop offset="0.8727" stop-color="#60e020"/><stop offset="0.9273" stop-color="#38d838"/></linearGradient>
<rect x="2110" y="180" width="12.6" height="440" fill="url(#ws45)"/>
<linearGradient id="ws46" gradientUnits="userSpaceOnUse" x1="0" y1="180" x2="0" y2="620"><stop offset="0.0455" stop-color="#c80000"/><stop offset="0.0975" stop-color="#e87000"/><stop offset="0.2112" stop-color="#eca800"/><stop offset="0.5616" stop-color="#e4e000"/><stop offset="0.7595" stop-color="#b0ea00"/><stop offset="0.8826" stop-color="#60e020"/><stop offset="0.9347" stop-color="#38d838"/></linearGradient>
<rect x="2122" y="180" width="12.6" height="440" fill="url(#ws46)"/>
<linearGradient id="ws47" gradientUnits="userSpaceOnUse" x1="0" y1="180" x2="0" y2="620"><stop offset="0.0455" stop-color="#c80000"/><stop offset="0.0950" stop-color="#e87000"/><stop offset="0.2087" stop-color="#eca800"/><stop offset="0.5640" stop-color="#e4e000"/><stop offset="0.7645" stop-color="#b0ea00"/><stop offset="0.8926" stop-color="#60e020"/><stop offset="0.9421" stop-color="#38d838"/></linearGradient>
<rect x="2134" y="180" width="12.6" height="440" fill="url(#ws47)"/>
<linearGradient id="ws48" gradientUnits="userSpaceOnUse" x1="0" y1="180" x2="0" y2="620"><stop offset="0.0455" stop-color="#c80000"/><stop offset="0.0926" stop-color="#e87000"/><stop offset="0.2062" stop-color="#eca800"/><stop offset="0.5665" stop-color="#e4e000"/><stop offset="0.7694" stop-color="#b0ea00"/><stop offset="0.9025" stop-color="#60e020"/><stop offset="0.9496" stop-color="#38d838"/></linearGradient>
<rect x="2146" y="180" width="12.6" height="440" fill="url(#ws48)"/>
<linearGradient id="ws49" gradientUnits="userSpaceOnUse" x1="0" y1="180" x2="0" y2="620"><stop offset="0.0455" stop-color="#c80000"/><stop offset="0.0909" stop-color="#e87000"/><stop offset="0.2045" stop-color="#eca800"/><stop offset="0.5682" stop-color="#e4e000"/><stop offset="0.7727" stop-color="#b0ea00"/><stop offset="0.9091" stop-color="#60e020"/><stop offset="0.9545" stop-color="#38d838"/></linearGradient>
<rect x="2158" y="180" width="12.6" height="440" fill="url(#ws49)"/>
<polygon points="1587.9,202.5 1592.1,208.5 1590.4,437.9 1586.2,437.9" fill="#fff" opacity="0.08"/>
<polygon points="1604.8,205.5 1609.3,211.5 1607.5,443.7 1603.0,443.7" fill="#000" opacity="0.06"/>
<polygon points="1614.1,207.8 1619.5,213.8 1617.3,446.8 1612.0,446.8" fill="#000" opacity="0.07"/>
<polygon points="1629.9,211.2 1635.9,217.2 1633.5,452.2 1627.5,452.2" fill="#fff" opacity="0.09"/>
<polygon points="1648.7,214.3 1652.6,220.3 1651.0,458.6 1647.1,458.6" fill="#000" opacity="0.11"/>
<polygon points="1657.2,215.7 1661.7,221.7 1659.9,461.5 1655.4,461.5" fill="#000" opacity="0.13"/>
<polygon points="1674.2,218.6 1679.2,224.6 1677.2,467.3 1672.2,467.3" fill="#fff" opacity="0.11"/>
<polygon points="1684.5,220.1 1689.5,226.1 1687.5,470.8 1682.5,470.8" fill="#000" opacity="0.10"/>
<polygon points="1700.4,221.7 1702.5,227.7 1701.7,476.2 1699.6,476.2" fill="#000" opacity="0.13"/>
<polygon points="1715.8,227.7 1720.7,233.7 1718.7,481.4 1713.8,481.4" fill="#fff" opacity="0.13"/>
<polygon points="1731.7,229.5 1737.4,235.5 1735.1,486.8 1729.4,486.8" fill="#000" opacity="0.09"/>
<polygon points="1746.4,261.4 1750.2,267.4 1748.7,491.8 1744.9,491.8" fill="#000" opacity="0.13"/>
<polygon points="1761.0,275.8 1763.4,281.8 1762.5,496.8 1760.1,496.8" fill="#fff" opacity="0.06"/>
<polygon points="1769.7,292.7 1775.6,298.7 1773.3,499.8 1767.4,499.8" fill="#000" opacity="0.09"/>
<polygon points="1787.0,318.0 1790.2,324.0 1788.9,505.6 1785.7,505.6" fill="#000" opacity="0.10"/>
<polygon points="1799.1,334.9 1802.5,340.9 1801.1,509.7 1797.7,509.7" fill="#fff" opacity="0.10"/>
<polygon points="1814.7,347.1 1820.3,353.1 1818.0,515.0 1812.4,515.0" fill="#000" opacity="0.11"/>
<polygon points="1831.4,347.2 1836.9,353.2 1834.7,520.7 1829.3,520.7" fill="#000" opacity="0.14"/>
<polygon points="1843.4,353.6 1846.0,359.6 1845.0,524.8 1842.3,524.8" fill="#fff" opacity="0.13"/>
<polygon points="1859.7,361.4 1865.3,367.4 1863.1,530.3 1857.5,530.3" fill="#000" opacity="0.10"/>
<polygon points="1871.7,368.8 1874.6,374.8 1873.4,534.4 1870.6,534.4" fill="#000" opacity="0.12"/>
<polygon points="1884.6,372.6 1887.7,378.6 1886.5,538.8 1883.3,538.8" fill="#fff" opacity="0.06"/>
<polygon points="1900.8,378.5 1906.8,384.5 1904.4,544.3 1898.4,544.3" fill="#000" opacity="0.06"/>
<polygon points="1914.4,389.9 1918.0,395.9 1916.6,548.9 1912.9,548.9" fill="#000" opacity="0.06"/>
<polygon points="1924.4,401.8 1929.4,407.8 1927.4,552.3 1922.3,552.3" fill="#fff" opacity="0.13"/>
<polygon points="1936.4,411.7 1940.8,417.7 1939.0,556.4 1934.6,556.4" fill="#000" opacity="0.05"/>
<polygon points="1955.7,428.4 1959.1,434.4 1957.7,563.0 1954.4,563.0" fill="#000" opacity="0.13"/>
<polygon points="1971.8,446.0 1975.9,452.0 1974.3,568.5 1970.2,568.5" fill="#fff" opacity="0.14"/>
<polygon points="1980.5,451.9 1982.8,457.9 1981.9,571.4 1979.6,571.4" fill="#000" opacity="0.10"/>
<polygon points="1992.3,460.1 1995.0,466.1 1993.9,575.4 1991.1,575.4" fill="#000" opacity="0.09"/>
<polygon points="2010.9,472.7 2013.5,478.7 2012.5,581.7 2009.8,581.7" fill="#fff" opacity="0.05"/>
<polygon points="2026.9,486.7 2030.2,492.7 2028.9,587.2 2025.6,587.2" fill="#000" opacity="0.14"/>
<polygon points="2041.2,496.5 2044.7,502.5 2043.3,592.0 2039.8,592.0" fill="#000" opacity="0.09"/>
<polygon points="2052.2,503.1 2056.7,509.1 2054.9,595.8 2050.3,595.8" fill="#fff" opacity="0.10"/>
<polygon points="2066.5,509.9 2071.0,515.9 2069.2,600.6 2064.7,600.6" fill="#000" opacity="0.13"/>
<polygon points="2080.1,515.3 2083.8,521.3 2082.3,605.3 2078.6,605.3" fill="#000" opacity="0.11"/>
<polygon points="2091.9,515.0 2095.1,521.0 2093.8,609.3 2090.6,609.3" fill="#fff" opacity="0.14"/>
<polygon points="2108.2,511.7 2112.4,517.7 2110.7,614.8 2106.5,614.8" fill="#000" opacity="0.05"/>
<polygon points="2121.3,506.4 2125.6,512.4 2123.9,619.3 2119.6,619.3" fill="#000" opacity="0.05"/>
<polygon points="2136.9,510.7 2141.5,516.7 2139.6,624.6 2135.1,624.6" fill="#fff" opacity="0.06"/>
</g>
<polygon points="1630.0,516.0 1740.0,573.0 1738.0,590.0 1725.0,615.0 1717.0,637.7 1708.5,676.6 1695.0,660.0 1682.6,648.5 1661.0,616.0 1643.7,551.3" fill="url(#blueg)"/>
<polygon points="1740.0,573.0 1795.0,601.0 1790.6,614.0 1782.0,620.0 1777.7,627.0 1769.0,616.0 1760.4,624.8 1752.0,600.0 1747.4,590.2" fill="#40c8e0"/>
<polygon points="2168.0,533.6 2180.5,526.8 2194.0,533.6 2205.0,520.0 2217.7,510.0 2225.0,515.0 2234.6,496.3 2244.8,499.7 2250.0,480.0 2261.7,455.7 2268.0,470.0 2278.6,435.4 2288.0,445.0 2299.0,408.3 2304.0,420.0 2309.0,366.0 2314.0,420.0 2319.3,415.0 2329.4,325.4 2336.0,400.0 2339.6,371.0 2345.0,440.0 2349.7,479.4 2356.0,500.0 2361.6,462.5 2366.7,543.7 2372.0,590.0 2380.0,611.4 2380.0,650.0 2340.0,700.0 2260.0,690.0 2200.0,650.0 2168.0,640.0" fill="url(#spkg)"/>
<polygon points="2175.0,535.8 2178.0,541.8 2177.0,640.0 2174.0,640.0" fill="#000" opacity="0.15"/>
<polygon points="2186.0,535.6 2189.0,541.6 2188.0,640.0 2185.0,640.0" fill="#000" opacity="0.15"/>
<polygon points="2197.0,535.9 2200.0,541.9 2199.0,640.0 2196.0,640.0" fill="#000" opacity="0.15"/>
<polygon points="2208.0,523.6 2211.0,529.6 2210.0,640.0 2207.0,640.0" fill="#000" opacity="0.15"/>
<polygon points="2219.0,516.9 2222.0,522.9 2221.0,640.0 2218.0,640.0" fill="#000" opacity="0.15"/>
<polygon points="2230.0,511.3 2233.0,517.3 2232.0,640.0 2229.0,640.0" fill="#000" opacity="0.15"/>
<polygon points="2241.0,504.4 2244.0,510.4 2243.0,640.0 2240.0,640.0" fill="#000" opacity="0.15"/>
<polygon points="2252.0,481.8 2255.0,487.8 2254.0,640.0 2251.0,640.0" fill="#000" opacity="0.15"/>
<polygon points="2263.0,464.7 2266.0,470.7 2265.0,640.0 2262.0,640.0" fill="#000" opacity="0.15"/>
<polygon points="2274.0,456.4 2277.0,462.4 2276.0,640.0 2273.0,640.0" fill="#000" opacity="0.15"/>
<polygon points="2285.0,447.9 2288.0,453.9 2287.0,640.0 2284.0,640.0" fill="#000" opacity="0.15"/>
<polygon points="2296.0,424.3 2299.0,430.3 2298.0,640.0 2295.0,640.0" fill="#000" opacity="0.15"/>
<polygon points="2307.0,393.6 2310.0,399.6 2309.0,640.0 2306.0,640.0" fill="#000" opacity="0.15"/>
<polygon points="2318.0,422.2 2321.0,428.2 2320.0,640.0 2317.0,640.0" fill="#000" opacity="0.15"/>
<polygon points="2329.0,334.9 2332.0,340.9 2331.0,640.0 2328.0,640.0" fill="#000" opacity="0.15"/>
<polygon points="2340.0,382.1 2343.0,388.1 2342.0,640.0 2339.0,640.0" fill="#000" opacity="0.15"/>
<polygon points="2351.0,489.7 2354.0,495.7 2353.0,640.0 2350.0,640.0" fill="#000" opacity="0.15"/>
<polygon points="2362.0,474.9 2365.0,480.9 2364.0,640.0 2361.0,640.0" fill="#000" opacity="0.15"/>
<polygon points="2263.0,765.0 2262.0,740.0 2290.0,712.0 2320.0,700.0 2350.0,690.0 2372.0,700.0 2372.0,752.0 2343.0,765.0" fill="url(#tealg)"/>
<polygon points="2366.0,705.0 2390.0,690.0 2412.0,658.0 2422.0,676.0 2400.0,712.0 2385.0,735.0 2372.0,752.0" fill="#38c838"/>
<polygon points="1456.0,423.0 2117.0,765.0 2078.0,765.0 1456.0,438.0" fill="#f6f000"/>
<line x1="1460" y1="439" x2="2078" y2="764" stroke="#b0a000" stroke-width="2.5"/>
<line x1="1460" y1="424.5" x2="2116" y2="764" stroke="#d8c800" stroke-width="1.5"/>
<ellipse cx="1456" cy="431" rx="15" ry="13" fill="#f4ee00"/>
<polygon points="2791.0,416.0 2192.0,765.0 2226.0,765.0 2791.0,432.0" fill="#ff0000"/>
<ellipse cx="2791" cy="424" rx="15" ry="13" fill="#ff1010"/>
<polygon points="2149.3,284.0 2170.0,284.0 2166.2,765.0 2147.5,765.0" fill="url(#arrg)"/>
<path d="M2160.1 222.9 L2191.2 281.3 Q2160 292 2128.5 281.3 Z" fill="#fafafa"/>
</svg><div class="gb" style="left:1083px;top:801px;width:695px;height:182px;"></div><div class="a" style="left:1092px;top:799px;width:124px;height:5px;background:#f0f0f0"></div><div class="gb" style="left:1784px;top:801px;width:695px;height:182px;"></div><div class="a" style="left:1793px;top:799px;width:126px;height:5px;background:#f0f0f0"></div><div class="gb" style="left:2485px;top:801px;width:695px;height:182px;"></div><div class="a" style="left:2494px;top:799px;width:106px;height:5px;background:#f0f0f0"></div><div class="spin" style="left:1321px;top:850px;width:219px;height:39px;background:#d8ffd8"></div><div class="sb" style="left:1508px;top:852px;width:30px;height:17px;"></div><div class="sb" style="left:1508px;top:869px;width:30px;height:18px;"></div><svg class="a" style="left:1517.0px;top:856.5px" width="12" height="8" viewBox="0 0 12 8"><path d="M1 7 L6 1 L11 7Z" fill="#000"/></svg><svg class="a" style="left:1517.0px;top:875.0px" width="12" height="8" viewBox="0 0 12 8"><path d="M1 1 L6 7 L11 1Z" fill="#000"/></svg><div class="spin" style="left:1321px;top:913px;width:219px;height:40px;background:#d8ffd8"></div><div class="sb" style="left:1508px;top:915px;width:30px;height:18px;"></div><div class="sb" style="left:1508px;top:933px;width:30px;height:18px;"></div><svg class="a" style="left:1517.0px;top:920.0px" width="12" height="8" viewBox="0 0 12 8"><path d="M1 7 L6 1 L11 7Z" fill="#000"/></svg><svg class="a" style="left:1517.0px;top:939.0px" width="12" height="8" viewBox="0 0 12 8"><path d="M1 1 L6 7 L11 1Z" fill="#000"/></svg><svg class="a" style="left:1546px;top:856.5px" width="12" height="12" viewBox="0 0 12 12"><circle cx="6" cy="6" r="3.3" fill="none" stroke="#000" stroke-width="2"/></svg><svg class="a" style="left:1546px;top:920px" width="12" height="12" viewBox="0 0 12 12"><circle cx="6" cy="6" r="3.3" fill="none" stroke="#000" stroke-width="2"/></svg><div class="spin" style="left:2022px;top:831px;width:219px;height:43px;background:#d4ffff"></div><div class="sb" style="left:2209px;top:833px;width:30px;height:19px;"></div><div class="sb" style="left:2209px;top:852px;width:30px;height:20px;"></div><svg class="a" style="left:2218.0px;top:838.5px" width="12" height="8" viewBox="0 0 12 8"><path d="M1 7 L6 1 L11 7Z" fill="#000"/></svg><svg class="a" style="left:2218.0px;top:859.0px" width="12" height="8" viewBox="0 0 12 8"><path d="M1 1 L6 7 L11 1Z" fill="#000"/></svg><div class="spin" style="left:2022px;top:880px;width:219px;height:43px;background:#d4ffff"></div><div class="sb" style="left:2209px;top:882px;width:30px;height:19px;"></div><div class="sb" style="left:2209px;top:901px;width:30px;height:20px;"></div><svg class="a" style="left:2218.0px;top:887.5px" width="12" height="8" viewBox="0 0 12 8"><path d="M1 7 L6 1 L11 7Z" fill="#000"/></svg><svg class="a" style="left:2218.0px;top:908.0px" width="12" height="8" viewBox="0 0 12 8"><path d="M1 1 L6 7 L11 1Z" fill="#000"/></svg><div class="spin" style="left:2022px;top:929px;width:219px;height:43px;background:#d4ffff"></div><div class="sb" style="left:2209px;top:931px;width:30px;height:19px;"></div><div class="sb" style="left:2209px;top:950px;width:30px;height:20px;"></div><svg class="a" style="left:2218.0px;top:936.5px" width="12" height="8" viewBox="0 0 12 8"><path d="M1 7 L6 1 L11 7Z" fill="#000"/></svg><svg class="a" style="left:2218.0px;top:957.0px" width="12" height="8" viewBox="0 0 12 8"><path d="M1 1 L6 7 L11 1Z" fill="#000"/></svg><svg class="a" style="left:2246.5px;top:838.8px" width="12" height="12" viewBox="0 0 12 12"><circle cx="6" cy="6" r="3.3" fill="none" stroke="#000" stroke-width="2"/></svg><svg class="a" style="left:2246.5px;top:888px" width="12" height="12" viewBox="0 0 12 12"><circle cx="6" cy="6" r="3.3" fill="none" stroke="#000" stroke-width="2"/></svg><div class="spin" style="left:2637px;top:831px;width:531px;height:43px;background:#ffffd4"></div><div class="sb" style="left:3136px;top:833px;width:30px;height:19px;"></div><div class="sb" style="left:3136px;top:852px;width:30px;height:20px;"></div><svg class="a" style="left:3145.0px;top:838.5px" width="12" height="8" viewBox="0 0 12 8"><path d="M1 7 L6 1 L11 7Z" fill="#000"/></svg><svg class="a" style="left:3145.0px;top:859.0px" width="12" height="8" viewBox="0 0 12 8"><path d="M1 1 L6 7 L11 1Z" fill="#000"/></svg><div class="spin" style="left:2637px;top:880px;width:531px;height:43px;background:#ffd4ff"></div><div class="sb" style="left:3136px;top:882px;width:30px;height:19px;"></div><div class="sb" style="left:3136px;top:901px;width:30px;height:20px;"></div><svg class="a" style="left:3145.0px;top:887.5px" width="12" height="8" viewBox="0 0 12 8"><path d="M1 7 L6 1 L11 7Z" fill="#000"/></svg><svg class="a" style="left:3145.0px;top:908.0px" width="12" height="8" viewBox="0 0 12 8"><path d="M1 1 L6 7 L11 1Z" fill="#000"/></svg><div class="a" style="left:2637px;top:930px;width:530px;height:41px;background:#ffd4ff;border-top:2px solid #5e505e;border-left:2px solid #5e505e"></div><div class="a" style="left:3150px;top:931px;width:17px;height:39px;border-left:1px solid #f8e8f8;border-right:2px solid #5e505e;border-bottom:2px solid #5e505e"></div><svg class="a" style="left:3153px;top:946px" width="10" height="8" viewBox="0 0 10 8"><path d="M1 2 L5 6 L9 2Z" fill="#000"/></svg><div class="tb" style="left:1086px;top:1002px;width:2091px;height:658px;"></div><svg class="a" style="left:0;top:0" width="3200" height="1724" viewBox="0 0 3200 1724">
<line x1="1160" y1="1089.4" x2="3012" y2="1089.4" stroke="#d2d2d2" stroke-width="1.3"/>
<line x1="1160" y1="1140.0" x2="3012" y2="1140.0" stroke="#d2d2d2" stroke-width="1.3"/>
<line x1="1160" y1="1190.6" x2="3012" y2="1190.6" stroke="#d2d2d2" stroke-width="1.3"/>
<line x1="1160" y1="1241.2" x2="3012" y2="1241.2" stroke="#d2d2d2" stroke-width="1.3"/>
<line x1="1160" y1="1291.8" x2="3012" y2="1291.8" stroke="#d2d2d2" stroke-width="1.3"/>
<line x1="1160" y1="1342.2" x2="3012" y2="1342.2" stroke="#d2d2d2" stroke-width="1.3"/>
<line x1="1160" y1="1392.7" x2="3012" y2="1392.7" stroke="#d2d2d2" stroke-width="1.3"/>
<line x1="1160" y1="1443.3" x2="3012" y2="1443.3" stroke="#d2d2d2" stroke-width="1.3"/>
<line x1="1160" y1="1494.0" x2="3012" y2="1494.0" stroke="#d2d2d2" stroke-width="1.3"/>
<line x1="1160" y1="1544.7" x2="3012" y2="1544.7" stroke="#d2d2d2" stroke-width="1.3"/>
<line x1="1328.3" y1="1089" x2="1328.3" y2="1595" stroke="#d2d2d2" stroke-width="1.3"/>
<line x1="1496.6" y1="1089" x2="1496.6" y2="1595" stroke="#d2d2d2" stroke-width="1.3"/>
<line x1="1664.9" y1="1089" x2="1664.9" y2="1595" stroke="#d2d2d2" stroke-width="1.3"/>
<line x1="1833.2" y1="1089" x2="1833.2" y2="1595" stroke="#d2d2d2" stroke-width="1.3"/>
<line x1="2001.5" y1="1089" x2="2001.5" y2="1595" stroke="#d2d2d2" stroke-width="1.3"/>
<line x1="2169.8" y1="1089" x2="2169.8" y2="1595" stroke="#d2d2d2" stroke-width="1.3"/>
<line x1="2338.1" y1="1089" x2="2338.1" y2="1595" stroke="#d2d2d2" stroke-width="1.3"/>
<line x1="2506.4" y1="1089" x2="2506.4" y2="1595" stroke="#d2d2d2" stroke-width="1.3"/>
<line x1="2674.7" y1="1089" x2="2674.7" y2="1595" stroke="#d2d2d2" stroke-width="1.3"/>
<line x1="2843.0" y1="1089" x2="2843.0" y2="1595" stroke="#d2d2d2" stroke-width="1.3"/>
<line x1="3011.3" y1="1089" x2="3011.3" y2="1595" stroke="#d2d2d2" stroke-width="1.3"/>
<line x1="1160" y1="1595" x2="3060" y2="1595" stroke="#484848" stroke-width="1.4"/>
<line x1="1160" y1="1042" x2="1160" y2="1595" stroke="#484848" stroke-width="1.4"/>
<path d="M1154.8 1042.5 L1160 1033 L1165.2 1042.5Z" fill="#000"/>
<path d="M3058 1589.8 L3068 1595 L3058 1600.2Z" fill="#000"/>
<line x1="1154" y1="1089.4" x2="1160" y2="1089.4" stroke="#303030" stroke-width="1.5"/>
<line x1="1154" y1="1140.0" x2="1160" y2="1140.0" stroke="#303030" stroke-width="1.5"/>
<line x1="1154" y1="1190.6" x2="1160" y2="1190.6" stroke="#303030" stroke-width="1.5"/>
<line x1="1154" y1="1241.2" x2="1160" y2="1241.2" stroke="#303030" stroke-width="1.5"/>
<line x1="1154" y1="1291.8" x2="1160" y2="1291.8" stroke="#303030" stroke-width="1.5"/>
<line x1="1154" y1="1342.2" x2="1160" y2="1342.2" stroke="#303030" stroke-width="1.5"/>
<line x1="1154" y1="1392.7" x2="1160" y2="1392.7" stroke="#303030" stroke-width="1.5"/>
<line x1="1154" y1="1443.3" x2="1160" y2="1443.3" stroke="#303030" stroke-width="1.5"/>
<line x1="1154" y1="1494.0" x2="1160" y2="1494.0" stroke="#303030" stroke-width="1.5"/>
<line x1="1154" y1="1544.7" x2="1160" y2="1544.7" stroke="#303030" stroke-width="1.5"/>
<line x1="1154" y1="1595" x2="1160" y2="1595" stroke="#303030" stroke-width="1.5"/>
<line x1="1160.0" y1="1595" x2="1160.0" y2="1601" stroke="#303030" stroke-width="1.5"/>
<line x1="1328.3" y1="1595" x2="1328.3" y2="1601" stroke="#303030" stroke-width="1.5"/>
<line x1="1496.6" y1="1595" x2="1496.6" y2="1601" stroke="#303030" stroke-width="1.5"/>
<line x1="1664.9" y1="1595" x2="1664.9" y2="1601" stroke="#303030" stroke-width="1.5"/>
<line x1="1833.2" y1="1595" x2="1833.2" y2="1601" stroke="#303030" stroke-width="1.5"/>
<line x1="2001.5" y1="1595" x2="2001.5" y2="1601" stroke="#303030" stroke-width="1.5"/>
<line x1="2169.8" y1="1595" x2="2169.8" y2="1601" stroke="#303030" stroke-width="1.5"/>
<line x1="2338.1" y1="1595" x2="2338.1" y2="1601" stroke="#303030" stroke-width="1.5"/>
<line x1="2506.4" y1="1595" x2="2506.4" y2="1601" stroke="#303030" stroke-width="1.5"/>
<line x1="2674.7" y1="1595" x2="2674.7" y2="1601" stroke="#303030" stroke-width="1.5"/>
<line x1="2843.0" y1="1595" x2="2843.0" y2="1601" stroke="#303030" stroke-width="1.5"/>
<line x1="3011.3" y1="1595" x2="3011.3" y2="1601" stroke="#303030" stroke-width="1.5"/>
<path d="M1160.0 1342.0 L1167.3 1342.0 L1174.5 1342.0 L1181.8 1342.0 L1189.0 1342.0 L1196.3 1342.0 L1203.6 1342.0 L1210.8 1342.0 L1218.1 1342.0 L1225.3 1342.0 L1232.6 1342.0 L1239.9 1342.0 L1247.1 1342.0 L1254.4 1342.0 L1261.6 1342.0 L1268.9 1342.0 L1276.2 1342.0 L1283.4 1342.0 L1290.7 1342.0 L1298.0 1342.0 L1305.2 1342.0 L1312.5 1342.0 L1319.7 1342.0 L1327.0 1342.0 L1334.3 1342.0 L1341.5 1342.0 L1348.8 1343.6 L1356.0 1340.5 L1363.3 1344.7 L1370.6 1338.2 L1377.8 1346.6 L1385.1 1337.4 L1392.3 1347.4 L1399.6 1334.4 L1406.9 1352.3 L1414.1 1313.4 L1421.4 1105.2 L1428.6 1271.4 L1435.9 1276.7 L1443.2 1133.5 L1450.4 1344.3 L1457.7 1473.0 L1464.9 1473.4 L1472.2 1456.2 L1479.5 1536.1 L1486.7 1432.9 L1494.0 1193.8 L1501.3 1242.3 L1508.5 1279.4 L1515.8 1252.7 L1523.0 1313.8 L1530.3 1397.8 L1537.6 1373.7 L1544.8 1354.3 L1552.1 1349.9 L1559.3 1344.6 L1566.6 1333.6 L1573.9 1333.0 L1581.1 1332.6 L1588.4 1339.4 L1595.6 1364.8 L1602.9 1372.0 L1610.2 1372.0 L1617.4 1370.0 L1624.7 1372.0 L1631.9 1357.8 L1639.2 1330.7 L1646.5 1315.8 L1653.7 1324.8 L1661.0 1327.7 L1668.2 1332.6 L1675.5 1341.1 L1682.8 1343.8 L1690.0 1343.8 L1697.3 1343.8 L1704.6 1346.6 L1711.8 1344.6 L1719.1 1340.6 L1726.3 1336.8 L1733.6 1335.9 L1740.9 1340.2 L1748.1 1344.9 L1755.4 1342.0 L1762.6 1343.1 L1769.9 1343.5 L1777.2 1343.5 L1784.4 1342.9 L1791.7 1342.9 L1798.9 1341.1 L1806.2 1341.5 L1813.5 1339.2 L1820.7 1333.6 L1828.0 1335.3 L1835.2 1337.1 L1842.5 1337.6 L1849.8 1338.2 L1857.0 1344.3 L1864.3 1346.6 L1871.5 1341.9 L1878.8 1344.3 L1886.1 1345.3 L1893.3 1341.1 L1900.6 1338.0 L1907.9 1340.4 L1915.1 1337.3 L1922.4 1339.6 L1929.6 1339.6 L1936.9 1341.9 L1944.2 1342.2 L1951.4 1344.3 L1958.7 1344.3 L1965.9 1344.3 L1973.2 1345.3 L1980.5 1343.5 L1987.7 1341.1 L1995.0 1340.7 L2002.2 1340.1 L2009.5 1338.5 L2016.8 1341.1 L2024.0 1340.1 L2031.3 1341.6 L2038.5 1342.4 L2045.8 1343.5 L2053.1 1343.2 L2060.3 1343.5 L2067.6 1343.5 L2074.8 1341.9 L2082.1 1341.9 L2089.4 1341.9 L2096.6 1340.7 L2103.9 1340.7 L2111.2 1341.6 L2118.4 1341.1 L2125.7 1341.9 L2132.9 1343.2 L2140.2 1343.2 L2147.5 1342.2 L2154.7 1343.2 L2162.0 1342.2 L2169.2 1341.9 L2176.5 1341.9 L2183.8 1341.9 L2191.0 1341.1 L2198.3 1341.1 L2205.5 1341.1 L2212.8 1341.9 L2220.1 1341.9 L2227.3 1342.2 L2234.6 1343.2 L2241.8 1341.4 L2249.1 1341.7 L2256.4 1341.6 L2263.6 1341.4 L2270.9 1341.6 L2278.1 1342.3 L2285.4 1343.0 L2292.7 1343.3 L2299.9 1342.9 L2307.2 1342.4 L2314.5 1342.3 L2321.7 1342.5 L2329.0 1342.6 L2336.2 1342.2 L2343.5 1341.4 L2350.8 1340.8 L2358.0 1340.8 L2365.3 1341.3 L2372.5 1341.7 L2379.8 1341.7 L2387.1 1341.5 L2394.3 1341.6 L2401.6 1342.2 L2408.8 1343.0 L2416.1 1343.3 L2423.4 1343.0 L2430.6 1342.5 L2437.9 1342.2 L2445.1 1342.4 L2452.4 1342.5 L2459.7 1342.2 L2466.9 1341.4 L2474.2 1340.8 L2481.4 1340.7 L2488.7 1341.2 L2496.0 1341.7 L2503.2 1341.8 L2510.5 1341.5 L2517.8 1341.6 L2525.0 1342.1 L2532.3 1342.9 L2539.5 1343.3 L2546.8 1343.1 L2554.1 1342.5 L2561.3 1342.2 L2568.6 1342.3 L2575.8 1342.5 L2583.1 1342.2 L2590.4 1341.5 L2597.6 1340.8 L2604.9 1340.7 L2612.1 1341.2 L2619.4 1341.7 L2626.7 1341.8 L2633.9 1341.6 L2641.2 1341.6 L2648.4 1342.1 L2655.7 1342.9 L2663.0 1343.3 L2670.2 1343.2 L2677.5 1342.6 L2684.7 1342.2 L2692.0 1342.2 L2699.3 1342.4 L2706.5 1342.2 L2713.8 1341.6 L2721.1 1340.9 L2728.3 1340.7 L2735.6 1341.1 L2742.8 1341.7 L2750.1 1341.9 L2757.4 1341.7 L2764.6 1341.6 L2771.9 1342.0 L2779.1 1342.8 L2786.4 1343.3 L2793.7 1343.2 L2800.9 1342.6 L2808.2 1342.2 L2815.4 1342.2 L2822.7 1342.4 L2830.0 1342.3 L2837.2 1341.6 L2844.5 1340.9 L2851.7 1340.6 L2859.0 1341.0 L2866.3 1341.6 L2873.5 1341.9 L2880.8 1341.8 L2888.0 1341.7 L2895.3 1342.0 L2902.6 1342.7 L2909.8 1343.3 L2917.1 1343.3 L2924.4 1342.7 L2931.6 1342.2 L2938.9 1342.1 L2946.1 1342.3 L2953.4 1342.2 L2960.7 1341.7 L2967.9 1341.0 L2975.2 1340.6 L2982.4 1340.9 L2989.7 1341.6 L2997.0 1341.9 L3004.2 1341.9 L3011.5 1341.7" fill="none" stroke="#e04040" stroke-width="1.2"/>
<path d="M1160.0 1342.0 L1167.3 1342.0 L1174.5 1342.0 L1181.8 1342.0 L1189.0 1342.0 L1196.3 1342.0 L1203.6 1342.0 L1210.8 1342.0 L1218.1 1342.0 L1225.3 1342.0 L1232.6 1342.0 L1239.9 1342.0 L1247.1 1342.0 L1254.4 1342.0 L1261.6 1342.0 L1268.9 1342.0 L1276.2 1342.0 L1283.4 1342.0 L1290.7 1342.0 L1298.0 1342.0 L1305.2 1342.0 L1312.5 1342.0 L1319.7 1342.0 L1327.0 1342.0 L1334.3 1342.0 L1341.5 1342.0 L1348.8 1340.9 L1356.0 1342.8 L1363.3 1339.4 L1370.6 1346.6 L1377.8 1335.2 L1385.1 1350.4 L1392.3 1331.7 L1399.6 1355.8 L1406.9 1322.2 L1414.1 1372.2 L1421.4 1204.5 L1428.6 1149.9 L1435.9 1305.7 L1443.2 1089.2 L1450.4 1266.8 L1457.7 1495.6 L1464.9 1477.2 L1472.2 1559.8 L1479.5 1588.0 L1486.7 1400.9 L1494.0 1172.8 L1501.3 1235.5 L1508.5 1249.6 L1515.8 1196.1 L1523.0 1299.3 L1530.3 1367.6 L1537.6 1349.3 L1544.8 1392.5 L1552.1 1404.8 L1559.3 1379.6 L1566.6 1338.2 L1573.9 1319.6 L1581.1 1327.7 L1588.4 1310.9 L1595.6 1344.6 L1602.9 1360.7 L1610.2 1382.5 L1617.4 1381.7 L1624.7 1380.4 L1631.9 1371.1 L1639.2 1343.8 L1646.5 1322.5 L1653.7 1314.6 L1661.0 1311.7 L1668.2 1315.8 L1675.5 1332.6 L1682.8 1343.8 L1690.0 1351.4 L1697.3 1352.4 L1704.6 1357.8 L1711.8 1348.7 L1719.1 1343.8 L1726.3 1336.8 L1733.6 1335.9 L1740.9 1332.4 L1748.1 1337.9 L1755.4 1339.4 L1762.6 1340.2 L1769.9 1343.5 L1777.2 1343.5 L1784.4 1347.0 L1791.7 1346.1 L1798.9 1345.8 L1806.2 1341.5 L1813.5 1339.2 L1820.7 1333.6 L1828.0 1332.4 L1835.2 1334.7 L1842.5 1337.6 L1849.8 1338.2 L1857.0 1344.3 L1864.3 1346.6 L1871.5 1345.8 L1878.8 1344.3 L1886.1 1345.3 L1893.3 1341.1 L1900.6 1338.0 L1907.9 1340.4 L1915.1 1340.1 L1922.4 1339.6 L1929.6 1340.7 L1936.9 1341.9 L1944.2 1342.2 L1951.4 1344.3 L1958.7 1344.3 L1965.9 1344.3 L1973.2 1345.3 L1980.5 1343.5 L1987.7 1341.1 L1995.0 1340.7 L2002.2 1340.1 L2009.5 1340.1 L2016.8 1341.1 L2024.0 1341.6 L2031.3 1341.6 L2038.5 1342.4 L2045.8 1343.5 L2053.1 1343.2 L2060.3 1345.0 L2067.6 1343.5 L2074.8 1341.9 L2082.1 1341.9 L2089.4 1341.9 L2096.6 1340.7 L2103.9 1340.7 L2111.2 1341.6 L2118.4 1341.1 L2125.7 1341.9 L2132.9 1343.2 L2140.2 1343.2 L2147.5 1342.2 L2154.7 1343.2 L2162.0 1342.2 L2169.2 1341.9 L2176.5 1341.9 L2183.8 1341.9 L2191.0 1341.1 L2198.3 1341.1 L2205.5 1341.1 L2212.8 1341.9 L2220.1 1341.9 L2227.3 1342.2 L2234.6 1343.2 L2241.8 1341.4 L2249.1 1341.7 L2256.4 1341.6 L2263.6 1341.4 L2270.9 1341.6 L2278.1 1342.3 L2285.4 1343.0 L2292.7 1343.3 L2299.9 1342.9 L2307.2 1342.4 L2314.5 1342.3 L2321.7 1342.5 L2329.0 1342.6 L2336.2 1342.2 L2343.5 1341.4 L2350.8 1340.8 L2358.0 1340.8 L2365.3 1341.3 L2372.5 1341.7 L2379.8 1341.7 L2387.1 1341.5 L2394.3 1341.6 L2401.6 1342.2 L2408.8 1343.0 L2416.1 1343.3 L2423.4 1343.0 L2430.6 1342.5 L2437.9 1342.2 L2445.1 1342.4 L2452.4 1342.5 L2459.7 1342.2 L2466.9 1341.4 L2474.2 1340.8 L2481.4 1340.7 L2488.7 1341.2 L2496.0 1341.7 L2503.2 1341.8 L2510.5 1341.5 L2517.8 1341.6 L2525.0 1342.1 L2532.3 1342.9 L2539.5 1343.3 L2546.8 1343.1 L2554.1 1342.5 L2561.3 1342.2 L2568.6 1342.3 L2575.8 1342.5 L2583.1 1342.2 L2590.4 1341.5 L2597.6 1340.8 L2604.9 1340.7 L2612.1 1341.2 L2619.4 1341.7 L2626.7 1341.8 L2633.9 1341.6 L2641.2 1341.6 L2648.4 1342.1 L2655.7 1342.9 L2663.0 1343.3 L2670.2 1343.2 L2677.5 1342.6 L2684.7 1342.2 L2692.0 1342.2 L2699.3 1342.4 L2706.5 1342.2 L2713.8 1341.6 L2721.1 1340.9 L2728.3 1340.7 L2735.6 1341.1 L2742.8 1341.7 L2750.1 1341.9 L2757.4 1341.7 L2764.6 1341.6 L2771.9 1342.0 L2779.1 1342.8 L2786.4 1343.3 L2793.7 1343.2 L2800.9 1342.6 L2808.2 1342.2 L2815.4 1342.2 L2822.7 1342.4 L2830.0 1342.3 L2837.2 1341.6 L2844.5 1340.9 L2851.7 1340.6 L2859.0 1341.0 L2866.3 1341.6 L2873.5 1341.9 L2880.8 1341.8 L2888.0 1341.7 L2895.3 1342.0 L2902.6 1342.7 L2909.8 1343.3 L2917.1 1343.3 L2924.4 1342.7 L2931.6 1342.2 L2938.9 1342.1 L2946.1 1342.3 L2953.4 1342.2 L2960.7 1341.7 L2967.9 1341.0 L2975.2 1340.6 L2982.4 1340.9 L2989.7 1341.6 L2997.0 1341.9 L3004.2 1341.9 L3011.5 1341.7" fill="none" stroke="#40e040" stroke-width="1.2"/>
<path d="M1157.6 1342.0a2.4 2.4 0 1 0 4.8 0a2.4 2.4 0 1 0 -4.8 0M1164.9 1342.0a2.4 2.4 0 1 0 4.8 0a2.4 2.4 0 1 0 -4.8 0M1172.1 1342.0a2.4 2.4 0 1 0 4.8 0a2.4 2.4 0 1 0 -4.8 0M1179.4 1342.0a2.4 2.4 0 1 0 4.8 0a2.4 2.4 0 1 0 -4.8 0M1186.6 1342.0a2.4 2.4 0 1 0 4.8 0a2.4 2.4 0 1 0 -4.8 0M1193.9 1342.0a2.4 2.4 0 1 0 4.8 0a2.4 2.4 0 1 0 -4.8 0M1201.2 1342.0a2.4 2.4 0 1 0 4.8 0a2.4 2.4 0 1 0 -4.8 0M1208.4 1342.0a2.4 2.4 0 1 0 4.8 0a2.4 2.4 0 1 0 -4.8 0M1215.7 1342.0a2.4 2.4 0 1 0 4.8 0a2.4 2.4 0 1 0 -4.8 0M1222.9 1342.0a2.4 2.4 0 1 0 4.8 0a2.4 2.4 0 1 0 -4.8 0M1230.2 1342.0a2.4 2.4 0 1 0 4.8 0a2.4 2.4 0 1 0 -4.8 0M1237.5 1342.0a2.4 2.4 0 1 0 4.8 0a2.4 2.4 0 1 0 -4.8 0M1244.7 1342.0a2.4 2.4 0 1 0 4.8 0a2.4 2.4 0 1 0 -4.8 0M1252.0 1342.0a2.4 2.4 0 1 0 4.8 0a2.4 2.4 0 1 0 -4.8 0M1259.2 1342.0a2.4 2.4 0 1 0 4.8 0a2.4 2.4 0 1 0 -4.8 0M1266.5 1342.0a2.4 2.4 0 1 0 4.8 0a2.4 2.4 0 1 0 -4.8 0M1273.8 1342.0a2.4 2.4 0 1 0 4.8 0a2.4 2.4 0 1 0 -4.8 0M1281.0 1342.0a2.4 2.4 0 1 0 4.8 0a2.4 2.4 0 1 0 -4.8 0M1288.3 1342.0a2.4 2.4 0 1 0 4.8 0a2.4 2.4 0 1 0 -4.8 0M1295.6 1342.0a2.4 2.4 0 1 0 4.8 0a2.4 2.4 0 1 0 -4.8 0M1302.8 1342.0a2.4 2.4 0 1 0 4.8 0a2.4 2.4 0 1 0 -4.8 0M1310.1 1342.0a2.4 2.4 0 1 0 4.8 0a2.4 2.4 0 1 0 -4.8 0M1317.3 1342.0a2.4 2.4 0 1 0 4.8 0a2.4 2.4 0 1 0 -4.8 0M1324.6 1342.0a2.4 2.4 0 1 0 4.8 0a2.4 2.4 0 1 0 -4.8 0M1331.9 1342.0a2.4 2.4 0 1 0 4.8 0a2.4 2.4 0 1 0 -4.8 0M1339.1 1342.0a2.4 2.4 0 1 0 4.8 0a2.4 2.4 0 1 0 -4.8 0M1346.4 1343.6a2.4 2.4 0 1 0 4.8 0a2.4 2.4 0 1 0 -4.8 0M1353.6 1340.5a2.4 2.4 0 1 0 4.8 0a2.4 2.4 0 1 0 -4.8 0M1360.9 1344.7a2.4 2.4 0 1 0 4.8 0a2.4 2.4 0 1 0 -4.8 0M1368.2 1338.2a2.4 2.4 0 1 0 4.8 0a2.4 2.4 0 1 0 -4.8 0M1375.4 1346.6a2.4 2.4 0 1 0 4.8 0a2.4 2.4 0 1 0 -4.8 0M1382.7 1337.4a2.4 2.4 0 1 0 4.8 0a2.4 2.4 0 1 0 -4.8 0M1389.9 1347.4a2.4 2.4 0 1 0 4.8 0a2.4 2.4 0 1 0 -4.8 0M1397.2 1334.4a2.4 2.4 0 1 0 4.8 0a2.4 2.4 0 1 0 -4.8 0M1404.5 1352.3a2.4 2.4 0 1 0 4.8 0a2.4 2.4 0 1 0 -4.8 0M1411.7 1313.4a2.4 2.4 0 1 0 4.8 0a2.4 2.4 0 1 0 -4.8 0M1419.0 1105.2a2.4 2.4 0 1 0 4.8 0a2.4 2.4 0 1 0 -4.8 0M1426.2 1271.4a2.4 2.4 0 1 0 4.8 0a2.4 2.4 0 1 0 -4.8 0M1433.5 1276.7a2.4 2.4 0 1 0 4.8 0a2.4 2.4 0 1 0 -4.8 0M1440.8 1133.5a2.4 2.4 0 1 0 4.8 0a2.4 2.4 0 1 0 -4.8 0M1448.0 1344.3a2.4 2.4 0 1 0 4.8 0a2.4 2.4 0 1 0 -4.8 0M1455.3 1473.0a2.4 2.4 0 1 0 4.8 0a2.4 2.4 0 1 0 -4.8 0M1462.5 1473.4a2.4 2.4 0 1 0 4.8 0a2.4 2.4 0 1 0 -4.8 0M1469.8 1456.2a2.4 2.4 0 1 0 4.8 0a2.4 2.4 0 1 0 -4.8 0M1477.1 1536.1a2.4 2.4 0 1 0 4.8 0a2.4 2.4 0 1 0 -4.8 0M1484.3 1432.9a2.4 2.4 0 1 0 4.8 0a2.4 2.4 0 1 0 -4.8 0M1491.6 1193.8a2.4 2.4 0 1 0 4.8 0a2.4 2.4 0 1 0 -4.8 0M1498.9 1242.3a2.4 2.4 0 1 0 4.8 0a2.4 2.4 0 1 0 -4.8 0M1506.1 1279.4a2.4 2.4 0 1 0 4.8 0a2.4 2.4 0 1 0 -4.8 0M1513.4 1252.7a2.4 2.4 0 1 0 4.8 0a2.4 2.4 0 1 0 -4.8 0M1520.6 1313.8a2.4 2.4 0 1 0 4.8 0a2.4 2.4 0 1 0 -4.8 0M1527.9 1397.8a2.4 2.4 0 1 0 4.8 0a2.4 2.4 0 1 0 -4.8 0M1535.2 1373.7a2.4 2.4 0 1 0 4.8 0a2.4 2.4 0 1 0 -4.8 0M1542.4 1354.3a2.4 2.4 0 1 0 4.8 0a2.4 2.4 0 1 0 -4.8 0M1549.7 1349.9a2.4 2.4 0 1 0 4.8 0a2.4 2.4 0 1 0 -4.8 0M1556.9 1344.6a2.4 2.4 0 1 0 4.8 0a2.4 2.4 0 1 0 -4.8 0M1564.2 1333.6a2.4 2.4 0 1 0 4.8 0a2.4 2.4 0 1 0 -4.8 0M1571.5 1333.0a2.4 2.4 0 1 0 4.8 0a2.4 2.4 0 1 0 -4.8 0M1578.7 1332.6a2.4 2.4 0 1 0 4.8 0a2.4 2.4 0 1 0 -4.8 0M1586.0 1339.4a2.4 2.4 0 1 0 4.8 0a2.4 2.4 0 1 0 -4.8 0M1593.2 1364.8a2.4 2.4 0 1 0 4.8 0a2.4 2.4 0 1 0 -4.8 0M1600.5 1372.0a2.4 2.4 0 1 0 4.8 0a2.4 2.4 0 1 0 -4.8 0M1607.8 1372.0a2.4 2.4 0 1 0 4.8 0a2.4 2.4 0 1 0 -4.8 0M1615.0 1370.0a2.4 2.4 0 1 0 4.8 0a2.4 2.4 0 1 0 -4.8 0M1622.3 1372.0a2.4 2.4 0 1 0 4.8 0a2.4 2.4 0 1 0 -4.8 0M1629.5 1357.8a2.4 2.4 0 1 0 4.8 0a2.4 2.4 0 1 0 -4.8 0M1636.8 1330.7a2.4 2.4 0 1 0 4.8 0a2.4 2.4 0 1 0 -4.8 0M1644.1 1315.8a2.4 2.4 0 1 0 4.8 0a2.4 2.4 0 1 0 -4.8 0M1651.3 1324.8a2.4 2.4 0 1 0 4.8 0a2.4 2.4 0 1 0 -4.8 0M1658.6 1327.7a2.4 2.4 0 1 0 4.8 0a2.4 2.4 0 1 0 -4.8 0M1665.8 1332.6a2.4 2.4 0 1 0 4.8 0a2.4 2.4 0 1 0 -4.8 0M1673.1 1341.1a2.4 2.4 0 1 0 4.8 0a2.4 2.4 0 1 0 -4.8 0M1680.4 1343.8a2.4 2.4 0 1 0 4.8 0a2.4 2.4 0 1 0 -4.8 0M1687.6 1343.8a2.4 2.4 0 1 0 4.8 0a2.4 2.4 0 1 0 -4.8 0M1694.9 1343.8a2.4 2.4 0 1 0 4.8 0a2.4 2.4 0 1 0 -4.8 0M1702.2 1346.6a2.4 2.4 0 1 0 4.8 0a2.4 2.4 0 1 0 -4.8 0M1709.4 1344.6a2.4 2.4 0 1 0 4.8 0a2.4 2.4 0 1 0 -4.8 0M1716.7 1340.6a2.4 2.4 0 1 0 4.8 0a2.4 2.4 0 1 0 -4.8 0M1723.9 1336.8a2.4 2.4 0 1 0 4.8 0a2.4 2.4 0 1 0 -4.8 0M1731.2 1335.9a2.4 2.4 0 1 0 4.8 0a2.4 2.4 0 1 0 -4.8 0M1738.5 1340.2a2.4 2.4 0 1 0 4.8 0a2.4 2.4 0 1 0 -4.8 0M1745.7 1344.9a2.4 2.4 0 1 0 4.8 0a2.4 2.4 0 1 0 -4.8 0M1753.0 1342.0a2.4 2.4 0 1 0 4.8 0a2.4 2.4 0 1 0 -4.8 0M1760.2 1343.1a2.4 2.4 0 1 0 4.8 0a2.4 2.4 0 1 0 -4.8 0M1767.5 1343.5a2.4 2.4 0 1 0 4.8 0a2.4 2.4 0 1 0 -4.8 0M1774.8 1343.5a2.4 2.4 0 1 0 4.8 0a2.4 2.4 0 1 0 -4.8 0M1782.0 1342.9a2.4 2.4 0 1 0 4.8 0a2.4 2.4 0 1 0 -4.8 0M1789.3 1342.9a2.4 2.4 0 1 0 4.8 0a2.4 2.4 0 1 0 -4.8 0M1796.5 1341.1a2.4 2.4 0 1 0 4.8 0a2.4 2.4 0 1 0 -4.8 0M1803.8 1341.5a2.4 2.4 0 1 0 4.8 0a2.4 2.4 0 1 0 -4.8 0M1811.1 1339.2a2.4 2.4 0 1 0 4.8 0a2.4 2.4 0 1 0 -4.8 0M1818.3 1333.6a2.4 2.4 0 1 0 4.8 0a2.4 2.4 0 1 0 -4.8 0M1825.6 1335.3a2.4 2.4 0 1 0 4.8 0a2.4 2.4 0 1 0 -4.8 0M1832.8 1337.1a2.4 2.4 0 1 0 4.8 0a2.4 2.4 0 1 0 -4.8 0M1840.1 1337.6a2.4 2.4 0 1 0 4.8 0a2.4 2.4 0 1 0 -4.8 0M1847.4 1338.2a2.4 2.4 0 1 0 4.8 0a2.4 2.4 0 1 0 -4.8 0M1854.6 1344.3a2.4 2.4 0 1 0 4.8 0a2.4 2.4 0 1 0 -4.8 0M1861.9 1346.6a2.4 2.4 0 1 0 4.8 0a2.4 2.4 0 1 0 -4.8 0M1869.1 1341.9a2.4 2.4 0 1 0 4.8 0a2.4 2.4 0 1 0 -4.8 0M1876.4 1344.3a2.4 2.4 0 1 0 4.8 0a2.4 2.4 0 1 0 -4.8 0M1883.7 1345.3a2.4 2.4 0 1 0 4.8 0a2.4 2.4 0 1 0 -4.8 0M1890.9 1341.1a2.4 2.4 0 1 0 4.8 0a2.4 2.4 0 1 0 -4.8 0M1898.2 1338.0a2.4 2.4 0 1 0 4.8 0a2.4 2.4 0 1 0 -4.8 0M1905.5 1340.4a2.4 2.4 0 1 0 4.8 0a2.4 2.4 0 1 0 -4.8 0M1912.7 1337.3a2.4 2.4 0 1 0 4.8 0a2.4 2.4 0 1 0 -4.8 0M1920.0 1339.6a2.4 2.4 0 1 0 4.8 0a2.4 2.4 0 1 0 -4.8 0M1927.2 1339.6a2.4 2.4 0 1 0 4.8 0a2.4 2.4 0 1 0 -4.8 0M1934.5 1341.9a2.4 2.4 0 1 0 4.8 0a2.4 2.4 0 1 0 -4.8 0M1941.8 1342.2a2.4 2.4 0 1 0 4.8 0a2.4 2.4 0 1 0 -4.8 0M1949.0 1344.3a2.4 2.4 0 1 0 4.8 0a2.4 2.4 0 1 0 -4.8 0M1956.3 1344.3a2.4 2.4 0 1 0 4.8 0a2.4 2.4 0 1 0 -4.8 0M1963.5 1344.3a2.4 2.4 0 1 0 4.8 0a2.4 2.4 0 1 0 -4.8 0M1970.8 1345.3a2.4 2.4 0 1 0 4.8 0a2.4 2.4 0 1 0 -4.8 0M1978.1 1343.5a2.4 2.4 0 1 0 4.8 0a2.4 2.4 0 1 0 -4.8 0M1985.3 1341.1a2.4 2.4 0 1 0 4.8 0a2.4 2.4 0 1 0 -4.8 0M1992.6 1340.7a2.4 2.4 0 1 0 4.8 0a2.4 2.4 0 1 0 -4.8 0M1999.8 1340.1a2.4 2.4 0 1 0 4.8 0a2.4 2.4 0 1 0 -4.8 0M2007.1 1338.5a2.4 2.4 0 1 0 4.8 0a2.4 2.4 0 1 0 -4.8 0M2014.4 1341.1a2.4 2.4 0 1 0 4.8 0a2.4 2.4 0 1 0 -4.8 0M2021.6 1340.1a2.4 2.4 0 1 0 4.8 0a2.4 2.4 0 1 0 -4.8 0M2028.9 1341.6a2.4 2.4 0 1 0 4.8 0a2.4 2.4 0 1 0 -4.8 0M2036.1 1342.4a2.4 2.4 0 1 0 4.8 0a2.4 2.4 0 1 0 -4.8 0M2043.4 1343.5a2.4 2.4 0 1 0 4.8 0a2.4 2.4 0 1 0 -4.8 0M2050.7 1343.2a2.4 2.4 0 1 0 4.8 0a2.4 2.4 0 1 0 -4.8 0M2057.9 1343.5a2.4 2.4 0 1 0 4.8 0a2.4 2.4 0 1 0 -4.8 0M2065.2 1343.5a2.4 2.4 0 1 0 4.8 0a2.4 2.4 0 1 0 -4.8 0M2072.4 1341.9a2.4 2.4 0 1 0 4.8 0a2.4 2.4 0 1 0 -4.8 0M2079.7 1341.9a2.4 2.4 0 1 0 4.8 0a2.4 2.4 0 1 0 -4.8 0M2087.0 1341.9a2.4 2.4 0 1 0 4.8 0a2.4 2.4 0 1 0 -4.8 0M2094.2 1340.7a2.4 2.4 0 1 0 4.8 0a2.4 2.4 0 1 0 -4.8 0M2101.5 1340.7a2.4 2.4 0 1 0 4.8 0a2.4 2.4 0 1 0 -4.8 0M2108.8 1341.6a2.4 2.4 0 1 0 4.8 0a2.4 2.4 0 1 0 -4.8 0M2116.0 1341.1a2.4 2.4 0 1 0 4.8 0a2.4 2.4 0 1 0 -4.8 0M2123.3 1341.9a2.4 2.4 0 1 0 4.8 0a2.4 2.4 0 1 0 -4.8 0M2130.5 1343.2a2.4 2.4 0 1 0 4.8 0a2.4 2.4 0 1 0 -4.8 0M2137.8 1343.2a2.4 2.4 0 1 0 4.8 0a2.4 2.4 0 1 0 -4.8 0M2145.1 1342.2a2.4 2.4 0 1 0 4.8 0a2.4 2.4 0 1 0 -4.8 0M2152.3 1343.2a2.4 2.4 0 1 0 4.8 0a2.4 2.4 0 1 0 -4.8 0M2159.6 1342.2a2.4 2.4 0 1 0 4.8 0a2.4 2.4 0 1 0 -4.8 0M2166.8 1341.9a2.4 2.4 0 1 0 4.8 0a2.4 2.4 0 1 0 -4.8 0M2174.1 1341.9a2.4 2.4 0 1 0 4.8 0a2.4 2.4 0 1 0 -4.8 0M2181.4 1341.9a2.4 2.4 0 1 0 4.8 0a2.4 2.4 0 1 0 -4.8 0M2188.6 1341.1a2.4 2.4 0 1 0 4.8 0a2.4 2.4 0 1 0 -4.8 0M2195.9 1341.1a2.4 2.4 0 1 0 4.8 0a2.4 2.4 0 1 0 -4.8 0M2203.1 1341.1a2.4 2.4 0 1 0 4.8 0a2.4 2.4 0 1 0 -4.8 0M2210.4 1341.9a2.4 2.4 0 1 0 4.8 0a2.4 2.4 0 1 0 -4.8 0M2217.7 1341.9a2.4 2.4 0 1 0 4.8 0a2.4 2.4 0 1 0 -4.8 0M2224.9 1342.2a2.4 2.4 0 1 0 4.8 0a2.4 2.4 0 1 0 -4.8 0M2232.2 1343.2a2.4 2.4 0 1 0 4.8 0a2.4 2.4 0 1 0 -4.8 0M2239.4 1341.4a2.4 2.4 0 1 0 4.8 0a2.4 2.4 0 1 0 -4.8 0M2246.7 1341.7a2.4 2.4 0 1 0 4.8 0a2.4 2.4 0 1 0 -4.8 0M2254.0 1341.6a2.4 2.4 0 1 0 4.8 0a2.4 2.4 0 1 0 -4.8 0M2261.2 1341.4a2.4 2.4 0 1 0 4.8 0a2.4 2.4 0 1 0 -4.8 0M2268.5 1341.6a2.4 2.4 0 1 0 4.8 0a2.4 2.4 0 1 0 -4.8 0M2275.7 1342.3a2.4 2.4 0 1 0 4.8 0a2.4 2.4 0 1 0 -4.8 0M2283.0 1343.0a2.4 2.4 0 1 0 4.8 0a2.4 2.4 0 1 0 -4.8 0M2290.3 1343.3a2.4 2.4 0 1 0 4.8 0a2.4 2.4 0 1 0 -4.8 0M2297.5 1342.9a2.4 2.4 0 1 0 4.8 0a2.4 2.4 0 1 0 -4.8 0M2304.8 1342.4a2.4 2.4 0 1 0 4.8 0a2.4 2.4 0 1 0 -4.8 0M2312.1 1342.3a2.4 2.4 0 1 0 4.8 0a2.4 2.4 0 1 0 -4.8 0M2319.3 1342.5a2.4 2.4 0 1 0 4.8 0a2.4 2.4 0 1 0 -4.8 0M2326.6 1342.6a2.4 2.4 0 1 0 4.8 0a2.4 2.4 0 1 0 -4.8 0M2333.8 1342.2a2.4 2.4 0 1 0 4.8 0a2.4 2.4 0 1 0 -4.8 0M2341.1 1341.4a2.4 2.4 0 1 0 4.8 0a2.4 2.4 0 1 0 -4.8 0M2348.4 1340.8a2.4 2.4 0 1 0 4.8 0a2.4 2.4 0 1 0 -4.8 0M2355.6 1340.8a2.4 2.4 0 1 0 4.8 0a2.4 2.4 0 1 0 -4.8 0M2362.9 1341.3a2.4 2.4 0 1 0 4.8 0a2.4 2.4 0 1 0 -4.8 0M2370.1 1341.7a2.4 2.4 0 1 0 4.8 0a2.4 2.4 0 1 0 -4.8 0M2377.4 1341.7a2.4 2.4 0 1 0 4.8 0a2.4 2.4 0 1 0 -4.8 0M2384.7 1341.5a2.4 2.4 0 1 0 4.8 0a2.4 2.4 0 1 0 -4.8 0M2391.9 1341.6a2.4 2.4 0 1 0 4.8 0a2.4 2.4 0 1 0 -4.8 0M2399.2 1342.2a2.4 2.4 0 1 0 4.8 0a2.4 2.4 0 1 0 -4.8 0M2406.4 1343.0a2.4 2.4 0 1 0 4.8 0a2.4 2.4 0 1 0 -4.8 0M2413.7 1343.3a2.4 2.4 0 1 0 4.8 0a2.4 2.4 0 1 0 -4.8 0M2421.0 1343.0a2.4 2.4 0 1 0 4.8 0a2.4 2.4 0 1 0 -4.8 0M2428.2 1342.5a2.4 2.4 0 1 0 4.8 0a2.4 2.4 0 1 0 -4.8 0M2435.5 1342.2a2.4 2.4 0 1 0 4.8 0a2.4 2.4 0 1 0 -4.8 0M2442.7 1342.4a2.4 2.4 0 1 0 4.8 0a2.4 2.4 0 1 0 -4.8 0M2450.0 1342.5a2.4 2.4 0 1 0 4.8 0a2.4 2.4 0 1 0 -4.8 0M2457.3 1342.2a2.4 2.4 0 1 0 4.8 0a2.4 2.4 0 1 0 -4.8 0M2464.5 1341.4a2.4 2.4 0 1 0 4.8 0a2.4 2.4 0 1 0 -4.8 0M2471.8 1340.8a2.4 2.4 0 1 0 4.8 0a2.4 2.4 0 1 0 -4.8 0M2479.0 1340.7a2.4 2.4 0 1 0 4.8 0a2.4 2.4 0 1 0 -4.8 0M2486.3 1341.2a2.4 2.4 0 1 0 4.8 0a2.4 2.4 0 1 0 -4.8 0M2493.6 1341.7a2.4 2.4 0 1 0 4.8 0a2.4 2.4 0 1 0 -4.8 0M2500.8 1341.8a2.4 2.4 0 1 0 4.8 0a2.4 2.4 0 1 0 -4.8 0M2508.1 1341.5a2.4 2.4 0 1 0 4.8 0a2.4 2.4 0 1 0 -4.8 0M2515.4 1341.6a2.4 2.4 0 1 0 4.8 0a2.4 2.4 0 1 0 -4.8 0M2522.6 1342.1a2.4 2.4 0 1 0 4.8 0a2.4 2.4 0 1 0 -4.8 0M2529.9 1342.9a2.4 2.4 0 1 0 4.8 0a2.4 2.4 0 1 0 -4.8 0M2537.1 1343.3a2.4 2.4 0 1 0 4.8 0a2.4 2.4 0 1 0 -4.8 0M2544.4 1343.1a2.4 2.4 0 1 0 4.8 0a2.4 2.4 0 1 0 -4.8 0M2551.7 1342.5a2.4 2.4 0 1 0 4.8 0a2.4 2.4 0 1 0 -4.8 0M2558.9 1342.2a2.4 2.4 0 1 0 4.8 0a2.4 2.4 0 1 0 -4.8 0M2566.2 1342.3a2.4 2.4 0 1 0 4.8 0a2.4 2.4 0 1 0 -4.8 0M2573.4 1342.5a2.4 2.4 0 1 0 4.8 0a2.4 2.4 0 1 0 -4.8 0M2580.7 1342.2a2.4 2.4 0 1 0 4.8 0a2.4 2.4 0 1 0 -4.8 0M2588.0 1341.5a2.4 2.4 0 1 0 4.8 0a2.4 2.4 0 1 0 -4.8 0M2595.2 1340.8a2.4 2.4 0 1 0 4.8 0a2.4 2.4 0 1 0 -4.8 0M2602.5 1340.7a2.4 2.4 0 1 0 4.8 0a2.4 2.4 0 1 0 -4.8 0M2609.7 1341.2a2.4 2.4 0 1 0 4.8 0a2.4 2.4 0 1 0 -4.8 0M2617.0 1341.7a2.4 2.4 0 1 0 4.8 0a2.4 2.4 0 1 0 -4.8 0M2624.3 1341.8a2.4 2.4 0 1 0 4.8 0a2.4 2.4 0 1 0 -4.8 0M2631.5 1341.6a2.4 2.4 0 1 0 4.8 0a2.4 2.4 0 1 0 -4.8 0M2638.8 1341.6a2.4 2.4 0 1 0 4.8 0a2.4 2.4 0 1 0 -4.8 0M2646.0 1342.1a2.4 2.4 0 1 0 4.8 0a2.4 2.4 0 1 0 -4.8 0M2653.3 1342.9a2.4 2.4 0 1 0 4.8 0a2.4 2.4 0 1 0 -4.8 0M2660.6 1343.3a2.4 2.4 0 1 0 4.8 0a2.4 2.4 0 1 0 -4.8 0M2667.8 1343.2a2.4 2.4 0 1 0 4.8 0a2.4 2.4 0 1 0 -4.8 0M2675.1 1342.6a2.4 2.4 0 1 0 4.8 0a2.4 2.4 0 1 0 -4.8 0M2682.3 1342.2a2.4 2.4 0 1 0 4.8 0a2.4 2.4 0 1 0 -4.8 0M2689.6 1342.2a2.4 2.4 0 1 0 4.8 0a2.4 2.4 0 1 0 -4.8 0M2696.9 1342.4a2.4 2.4 0 1 0 4.8 0a2.4 2.4 0 1 0 -4.8 0M2704.1 1342.2a2.4 2.4 0 1 0 4.8 0a2.4 2.4 0 1 0 -4.8 0M2711.4 1341.6a2.4 2.4 0 1 0 4.8 0a2.4 2.4 0 1 0 -4.8 0M2718.7 1340.9a2.4 2.4 0 1 0 4.8 0a2.4 2.4 0 1 0 -4.8 0M2725.9 1340.7a2.4 2.4 0 1 0 4.8 0a2.4 2.4 0 1 0 -4.8 0M2733.2 1341.1a2.4 2.4 0 1 0 4.8 0a2.4 2.4 0 1 0 -4.8 0M2740.4 1341.7a2.4 2.4 0 1 0 4.8 0a2.4 2.4 0 1 0 -4.8 0M2747.7 1341.9a2.4 2.4 0 1 0 4.8 0a2.4 2.4 0 1 0 -4.8 0M2755.0 1341.7a2.4 2.4 0 1 0 4.8 0a2.4 2.4 0 1 0 -4.8 0M2762.2 1341.6a2.4 2.4 0 1 0 4.8 0a2.4 2.4 0 1 0 -4.8 0M2769.5 1342.0a2.4 2.4 0 1 0 4.8 0a2.4 2.4 0 1 0 -4.8 0M2776.7 1342.8a2.4 2.4 0 1 0 4.8 0a2.4 2.4 0 1 0 -4.8 0M2784.0 1343.3a2.4 2.4 0 1 0 4.8 0a2.4 2.4 0 1 0 -4.8 0M2791.3 1343.2a2.4 2.4 0 1 0 4.8 0a2.4 2.4 0 1 0 -4.8 0M2798.5 1342.6a2.4 2.4 0 1 0 4.8 0a2.4 2.4 0 1 0 -4.8 0M2805.8 1342.2a2.4 2.4 0 1 0 4.8 0a2.4 2.4 0 1 0 -4.8 0M2813.0 1342.2a2.4 2.4 0 1 0 4.8 0a2.4 2.4 0 1 0 -4.8 0M2820.3 1342.4a2.4 2.4 0 1 0 4.8 0a2.4 2.4 0 1 0 -4.8 0M2827.6 1342.3a2.4 2.4 0 1 0 4.8 0a2.4 2.4 0 1 0 -4.8 0M2834.8 1341.6a2.4 2.4 0 1 0 4.8 0a2.4 2.4 0 1 0 -4.8 0M2842.1 1340.9a2.4 2.4 0 1 0 4.8 0a2.4 2.4 0 1 0 -4.8 0M2849.3 1340.6a2.4 2.4 0 1 0 4.8 0a2.4 2.4 0 1 0 -4.8 0M2856.6 1341.0a2.4 2.4 0 1 0 4.8 0a2.4 2.4 0 1 0 -4.8 0M2863.9 1341.6a2.4 2.4 0 1 0 4.8 0a2.4 2.4 0 1 0 -4.8 0M2871.1 1341.9a2.4 2.4 0 1 0 4.8 0a2.4 2.4 0 1 0 -4.8 0M2878.4 1341.8a2.4 2.4 0 1 0 4.8 0a2.4 2.4 0 1 0 -4.8 0M2885.6 1341.7a2.4 2.4 0 1 0 4.8 0a2.4 2.4 0 1 0 -4.8 0M2892.9 1342.0a2.4 2.4 0 1 0 4.8 0a2.4 2.4 0 1 0 -4.8 0M2900.2 1342.7a2.4 2.4 0 1 0 4.8 0a2.4 2.4 0 1 0 -4.8 0M2907.4 1343.3a2.4 2.4 0 1 0 4.8 0a2.4 2.4 0 1 0 -4.8 0M2914.7 1343.3a2.4 2.4 0 1 0 4.8 0a2.4 2.4 0 1 0 -4.8 0M2922.0 1342.7a2.4 2.4 0 1 0 4.8 0a2.4 2.4 0 1 0 -4.8 0M2929.2 1342.2a2.4 2.4 0 1 0 4.8 0a2.4 2.4 0 1 0 -4.8 0M2936.5 1342.1a2.4 2.4 0 1 0 4.8 0a2.4 2.4 0 1 0 -4.8 0M2943.7 1342.3a2.4 2.4 0 1 0 4.8 0a2.4 2.4 0 1 0 -4.8 0M2951.0 1342.2a2.4 2.4 0 1 0 4.8 0a2.4 2.4 0 1 0 -4.8 0M2958.3 1341.7a2.4 2.4 0 1 0 4.8 0a2.4 2.4 0 1 0 -4.8 0M2965.5 1341.0a2.4 2.4 0 1 0 4.8 0a2.4 2.4 0 1 0 -4.8 0M2972.8 1340.6a2.4 2.4 0 1 0 4.8 0a2.4 2.4 0 1 0 -4.8 0M2980.0 1340.9a2.4 2.4 0 1 0 4.8 0a2.4 2.4 0 1 0 -4.8 0M2987.3 1341.6a2.4 2.4 0 1 0 4.8 0a2.4 2.4 0 1 0 -4.8 0M2994.6 1341.9a2.4 2.4 0 1 0 4.8 0a2.4 2.4 0 1 0 -4.8 0M3001.8 1341.9a2.4 2.4 0 1 0 4.8 0a2.4 2.4 0 1 0 -4.8 0M3009.1 1341.7a2.4 2.4 0 1 0 4.8 0a2.4 2.4 0 1 0 -4.8 0M1157.6 1342.0a2.4 2.4 0 1 0 4.8 0a2.4 2.4 0 1 0 -4.8 0M1164.9 1342.0a2.4 2.4 0 1 0 4.8 0a2.4 2.4 0 1 0 -4.8 0M1172.1 1342.0a2.4 2.4 0 1 0 4.8 0a2.4 2.4 0 1 0 -4.8 0M1179.4 1342.0a2.4 2.4 0 1 0 4.8 0a2.4 2.4 0 1 0 -4.8 0M1186.6 1342.0a2.4 2.4 0 1 0 4.8 0a2.4 2.4 0 1 0 -4.8 0M1193.9 1342.0a2.4 2.4 0 1 0 4.8 0a2.4 2.4 0 1 0 -4.8 0M1201.2 1342.0a2.4 2.4 0 1 0 4.8 0a2.4 2.4 0 1 0 -4.8 0M1208.4 1342.0a2.4 2.4 0 1 0 4.8 0a2.4 2.4 0 1 0 -4.8 0M1215.7 1342.0a2.4 2.4 0 1 0 4.8 0a2.4 2.4 0 1 0 -4.8 0M1222.9 1342.0a2.4 2.4 0 1 0 4.8 0a2.4 2.4 0 1 0 -4.8 0M1230.2 1342.0a2.4 2.4 0 1 0 4.8 0a2.4 2.4 0 1 0 -4.8 0M1237.5 1342.0a2.4 2.4 0 1 0 4.8 0a2.4 2.4 0 1 0 -4.8 0M1244.7 1342.0a2.4 2.4 0 1 0 4.8 0a2.4 2.4 0 1 0 -4.8 0M1252.0 1342.0a2.4 2.4 0 1 0 4.8 0a2.4 2.4 0 1 0 -4.8 0M1259.2 1342.0a2.4 2.4 0 1 0 4.8 0a2.4 2.4 0 1 0 -4.8 0M1266.5 1342.0a2.4 2.4 0 1 0 4.8 0a2.4 2.4 0 1 0 -4.8 0M1273.8 1342.0a2.4 2.4 0 1 0 4.8 0a2.4 2.4 0 1 0 -4.8 0M1281.0 1342.0a2.4 2.4 0 1 0 4.8 0a2.4 2.4 0 1 0 -4.8 0M1288.3 1342.0a2.4 2.4 0 1 0 4.8 0a2.4 2.4 0 1 0 -4.8 0M1295.6 1342.0a2.4 2.4 0 1 0 4.8 0a2.4 2.4 0 1 0 -4.8 0M1302.8 1342.0a2.4 2.4 0 1 0 4.8 0a2.4 2.4 0 1 0 -4.8 0M1310.1 1342.0a2.4 2.4 0 1 0 4.8 0a2.4 2.4 0 1 0 -4.8 0M1317.3 1342.0a2.4 2.4 0 1 0 4.8 0a2.4 2.4 0 1 0 -4.8 0M1324.6 1342.0a2.4 2.4 0 1 0 4.8 0a2.4 2.4 0 1 0 -4.8 0M1331.9 1342.0a2.4 2.4 0 1 0 4.8 0a2.4 2.4 0 1 0 -4.8 0M1339.1 1342.0a2.4 2.4 0 1 0 4.8 0a2.4 2.4 0 1 0 -4.8 0M1346.4 1340.9a2.4 2.4 0 1 0 4.8 0a2.4 2.4 0 1 0 -4.8 0M1353.6 1342.8a2.4 2.4 0 1 0 4.8 0a2.4 2.4 0 1 0 -4.8 0M1360.9 1339.4a2.4 2.4 0 1 0 4.8 0a2.4 2.4 0 1 0 -4.8 0M1368.2 1346.6a2.4 2.4 0 1 0 4.8 0a2.4 2.4 0 1 0 -4.8 0M1375.4 1335.2a2.4 2.4 0 1 0 4.8 0a2.4 2.4 0 1 0 -4.8 0M1382.7 1350.4a2.4 2.4 0 1 0 4.8 0a2.4 2.4 0 1 0 -4.8 0M1389.9 1331.7a2.4 2.4 0 1 0 4.8 0a2.4 2.4 0 1 0 -4.8 0M1397.2 1355.8a2.4 2.4 0 1 0 4.8 0a2.4 2.4 0 1 0 -4.8 0M1404.5 1322.2a2.4 2.4 0 1 0 4.8 0a2.4 2.4 0 1 0 -4.8 0M1411.7 1372.2a2.4 2.4 0 1 0 4.8 0a2.4 2.4 0 1 0 -4.8 0M1419.0 1204.5a2.4 2.4 0 1 0 4.8 0a2.4 2.4 0 1 0 -4.8 0M1426.2 1149.9a2.4 2.4 0 1 0 4.8 0a2.4 2.4 0 1 0 -4.8 0M1433.5 1305.7a2.4 2.4 0 1 0 4.8 0a2.4 2.4 0 1 0 -4.8 0M1440.8 1089.2a2.4 2.4 0 1 0 4.8 0a2.4 2.4 0 1 0 -4.8 0M1448.0 1266.8a2.4 2.4 0 1 0 4.8 0a2.4 2.4 0 1 0 -4.8 0M1455.3 1495.6a2.4 2.4 0 1 0 4.8 0a2.4 2.4 0 1 0 -4.8 0M1462.5 1477.2a2.4 2.4 0 1 0 4.8 0a2.4 2.4 0 1 0 -4.8 0M1469.8 1559.8a2.4 2.4 0 1 0 4.8 0a2.4 2.4 0 1 0 -4.8 0M1477.1 1588.0a2.4 2.4 0 1 0 4.8 0a2.4 2.4 0 1 0 -4.8 0M1484.3 1400.9a2.4 2.4 0 1 0 4.8 0a2.4 2.4 0 1 0 -4.8 0M1491.6 1172.8a2.4 2.4 0 1 0 4.8 0a2.4 2.4 0 1 0 -4.8 0M1498.9 1235.5a2.4 2.4 0 1 0 4.8 0a2.4 2.4 0 1 0 -4.8 0M1506.1 1249.6a2.4 2.4 0 1 0 4.8 0a2.4 2.4 0 1 0 -4.8 0M1513.4 1196.1a2.4 2.4 0 1 0 4.8 0a2.4 2.4 0 1 0 -4.8 0M1520.6 1299.3a2.4 2.4 0 1 0 4.8 0a2.4 2.4 0 1 0 -4.8 0M1527.9 1367.6a2.4 2.4 0 1 0 4.8 0a2.4 2.4 0 1 0 -4.8 0M1535.2 1349.3a2.4 2.4 0 1 0 4.8 0a2.4 2.4 0 1 0 -4.8 0M1542.4 1392.5a2.4 2.4 0 1 0 4.8 0a2.4 2.4 0 1 0 -4.8 0M1549.7 1404.8a2.4 2.4 0 1 0 4.8 0a2.4 2.4 0 1 0 -4.8 0M1556.9 1379.6a2.4 2.4 0 1 0 4.8 0a2.4 2.4 0 1 0 -4.8 0M1564.2 1338.2a2.4 2.4 0 1 0 4.8 0a2.4 2.4 0 1 0 -4.8 0M1571.5 1319.6a2.4 2.4 0 1 0 4.8 0a2.4 2.4 0 1 0 -4.8 0M1578.7 1327.7a2.4 2.4 0 1 0 4.8 0a2.4 2.4 0 1 0 -4.8 0M1586.0 1310.9a2.4 2.4 0 1 0 4.8 0a2.4 2.4 0 1 0 -4.8 0M1593.2 1344.6a2.4 2.4 0 1 0 4.8 0a2.4 2.4 0 1 0 -4.8 0M1600.5 1360.7a2.4 2.4 0 1 0 4.8 0a2.4 2.4 0 1 0 -4.8 0M1607.8 1382.5a2.4 2.4 0 1 0 4.8 0a2.4 2.4 0 1 0 -4.8 0M1615.0 1381.7a2.4 2.4 0 1 0 4.8 0a2.4 2.4 0 1 0 -4.8 0M1622.3 1380.4a2.4 2.4 0 1 0 4.8 0a2.4 2.4 0 1 0 -4.8 0M1629.5 1371.1a2.4 2.4 0 1 0 4.8 0a2.4 2.4 0 1 0 -4.8 0M1636.8 1343.8a2.4 2.4 0 1 0 4.8 0a2.4 2.4 0 1 0 -4.8 0M1644.1 1322.5a2.4 2.4 0 1 0 4.8 0a2.4 2.4 0 1 0 -4.8 0M1651.3 1314.6a2.4 2.4 0 1 0 4.8 0a2.4 2.4 0 1 0 -4.8 0M1658.6 1311.7a2.4 2.4 0 1 0 4.8 0a2.4 2.4 0 1 0 -4.8 0M1665.8 1315.8a2.4 2.4 0 1 0 4.8 0a2.4 2.4 0 1 0 -4.8 0M1673.1 1332.6a2.4 2.4 0 1 0 4.8 0a2.4 2.4 0 1 0 -4.8 0M1680.4 1343.8a2.4 2.4 0 1 0 4.8 0a2.4 2.4 0 1 0 -4.8 0M1687.6 1351.4a2.4 2.4 0 1 0 4.8 0a2.4 2.4 0 1 0 -4.8 0M1694.9 1352.4a2.4 2.4 0 1 0 4.8 0a2.4 2.4 0 1 0 -4.8 0M1702.2 1357.8a2.4 2.4 0 1 0 4.8 0a2.4 2.4 0 1 0 -4.8 0M1709.4 1348.7a2.4 2.4 0 1 0 4.8 0a2.4 2.4 0 1 0 -4.8 0M1716.7 1343.8a2.4 2.4 0 1 0 4.8 0a2.4 2.4 0 1 0 -4.8 0M1723.9 1336.8a2.4 2.4 0 1 0 4.8 0a2.4 2.4 0 1 0 -4.8 0M1731.2 1335.9a2.4 2.4 0 1 0 4.8 0a2.4 2.4 0 1 0 -4.8 0M1738.5 1332.4a2.4 2.4 0 1 0 4.8 0a2.4 2.4 0 1 0 -4.8 0M1745.7 1337.9a2.4 2.4 0 1 0 4.8 0a2.4 2.4 0 1 0 -4.8 0M1753.0 1339.4a2.4 2.4 0 1 0 4.8 0a2.4 2.4 0 1 0 -4.8 0M1760.2 1340.2a2.4 2.4 0 1 0 4.8 0a2.4 2.4 0 1 0 -4.8 0M1767.5 1343.5a2.4 2.4 0 1 0 4.8 0a2.4 2.4 0 1 0 -4.8 0M1774.8 1343.5a2.4 2.4 0 1 0 4.8 0a2.4 2.4 0 1 0 -4.8 0M1782.0 1347.0a2.4 2.4 0 1 0 4.8 0a2.4 2.4 0 1 0 -4.8 0M1789.3 1346.1a2.4 2.4 0 1 0 4.8 0a2.4 2.4 0 1 0 -4.8 0M1796.5 1345.8a2.4 2.4 0 1 0 4.8 0a2.4 2.4 0 1 0 -4.8 0M1803.8 1341.5a2.4 2.4 0 1 0 4.8 0a2.4 2.4 0 1 0 -4.8 0M1811.1 1339.2a2.4 2.4 0 1 0 4.8 0a2.4 2.4 0 1 0 -4.8 0M1818.3 1333.6a2.4 2.4 0 1 0 4.8 0a2.4 2.4 0 1 0 -4.8 0M1825.6 1332.4a2.4 2.4 0 1 0 4.8 0a2.4 2.4 0 1 0 -4.8 0M1832.8 1334.7a2.4 2.4 0 1 0 4.8 0a2.4 2.4 0 1 0 -4.8 0M1840.1 1337.6a2.4 2.4 0 1 0 4.8 0a2.4 2.4 0 1 0 -4.8 0M1847.4 1338.2a2.4 2.4 0 1 0 4.8 0a2.4 2.4 0 1 0 -4.8 0M1854.6 1344.3a2.4 2.4 0 1 0 4.8 0a2.4 2.4 0 1 0 -4.8 0M1861.9 1346.6a2.4 2.4 0 1 0 4.8 0a2.4 2.4 0 1 0 -4.8 0M1869.1 1345.8a2.4 2.4 0 1 0 4.8 0a2.4 2.4 0 1 0 -4.8 0M1876.4 1344.3a2.4 2.4 0 1 0 4.8 0a2.4 2.4 0 1 0 -4.8 0M1883.7 1345.3a2.4 2.4 0 1 0 4.8 0a2.4 2.4 0 1 0 -4.8 0M1890.9 1341.1a2.4 2.4 0 1 0 4.8 0a2.4 2.4 0 1 0 -4.8 0M1898.2 1338.0a2.4 2.4 0 1 0 4.8 0a2.4 2.4 0 1 0 -4.8 0M1905.5 1340.4a2.4 2.4 0 1 0 4.8 0a2.4 2.4 0 1 0 -4.8 0M1912.7 1340.1a2.4 2.4 0 1 0 4.8 0a2.4 2.4 0 1 0 -4.8 0M1920.0 1339.6a2.4 2.4 0 1 0 4.8 0a2.4 2.4 0 1 0 -4.8 0M1927.2 1340.7a2.4 2.4 0 1 0 4.8 0a2.4 2.4 0 1 0 -4.8 0M1934.5 1341.9a2.4 2.4 0 1 0 4.8 0a2.4 2.4 0 1 0 -4.8 0M1941.8 1342.2a2.4 2.4 0 1 0 4.8 0a2.4 2.4 0 1 0 -4.8 0M1949.0 1344.3a2.4 2.4 0 1 0 4.8 0a2.4 2.4 0 1 0 -4.8 0M1956.3 1344.3a2.4 2.4 0 1 0 4.8 0a2.4 2.4 0 1 0 -4.8 0M1963.5 1344.3a2.4 2.4 0 1 0 4.8 0a2.4 2.4 0 1 0 -4.8 0M1970.8 1345.3a2.4 2.4 0 1 0 4.8 0a2.4 2.4 0 1 0 -4.8 0M1978.1 1343.5a2.4 2.4 0 1 0 4.8 0a2.4 2.4 0 1 0 -4.8 0M1985.3 1341.1a2.4 2.4 0 1 0 4.8 0a2.4 2.4 0 1 0 -4.8 0M1992.6 1340.7a2.4 2.4 0 1 0 4.8 0a2.4 2.4 0 1 0 -4.8 0M1999.8 1340.1a2.4 2.4 0 1 0 4.8 0a2.4 2.4 0 1 0 -4.8 0M2007.1 1340.1a2.4 2.4 0 1 0 4.8 0a2.4 2.4 0 1 0 -4.8 0M2014.4 1341.1a2.4 2.4 0 1 0 4.8 0a2.4 2.4 0 1 0 -4.8 0M2021.6 1341.6a2.4 2.4 0 1 0 4.8 0a2.4 2.4 0 1 0 -4.8 0M2028.9 1341.6a2.4 2.4 0 1 0 4.8 0a2.4 2.4 0 1 0 -4.8 0M2036.1 1342.4a2.4 2.4 0 1 0 4.8 0a2.4 2.4 0 1 0 -4.8 0M2043.4 1343.5a2.4 2.4 0 1 0 4.8 0a2.4 2.4 0 1 0 -4.8 0M2050.7 1343.2a2.4 2.4 0 1 0 4.8 0a2.4 2.4 0 1 0 -4.8 0M2057.9 1345.0a2.4 2.4 0 1 0 4.8 0a2.4 2.4 0 1 0 -4.8 0M2065.2 1343.5a2.4 2.4 0 1 0 4.8 0a2.4 2.4 0 1 0 -4.8 0M2072.4 1341.9a2.4 2.4 0 1 0 4.8 0a2.4 2.4 0 1 0 -4.8 0M2079.7 1341.9a2.4 2.4 0 1 0 4.8 0a2.4 2.4 0 1 0 -4.8 0M2087.0 1341.9a2.4 2.4 0 1 0 4.8 0a2.4 2.4 0 1 0 -4.8 0M2094.2 1340.7a2.4 2.4 0 1 0 4.8 0a2.4 2.4 0 1 0 -4.8 0M2101.5 1340.7a2.4 2.4 0 1 0 4.8 0a2.4 2.4 0 1 0 -4.8 0M2108.8 1341.6a2.4 2.4 0 1 0 4.8 0a2.4 2.4 0 1 0 -4.8 0M2116.0 1341.1a2.4 2.4 0 1 0 4.8 0a2.4 2.4 0 1 0 -4.8 0M2123.3 1341.9a2.4 2.4 0 1 0 4.8 0a2.4 2.4 0 1 0 -4.8 0M2130.5 1343.2a2.4 2.4 0 1 0 4.8 0a2.4 2.4 0 1 0 -4.8 0M2137.8 1343.2a2.4 2.4 0 1 0 4.8 0a2.4 2.4 0 1 0 -4.8 0M2145.1 1342.2a2.4 2.4 0 1 0 4.8 0a2.4 2.4 0 1 0 -4.8 0M2152.3 1343.2a2.4 2.4 0 1 0 4.8 0a2.4 2.4 0 1 0 -4.8 0M2159.6 1342.2a2.4 2.4 0 1 0 4.8 0a2.4 2.4 0 1 0 -4.8 0M2166.8 1341.9a2.4 2.4 0 1 0 4.8 0a2.4 2.4 0 1 0 -4.8 0M2174.1 1341.9a2.4 2.4 0 1 0 4.8 0a2.4 2.4 0 1 0 -4.8 0M2181.4 1341.9a2.4 2.4 0 1 0 4.8 0a2.4 2.4 0 1 0 -4.8 0M2188.6 1341.1a2.4 2.4 0 1 0 4.8 0a2.4 2.4 0 1 0 -4.8 0M2195.9 1341.1a2.4 2.4 0 1 0 4.8 0a2.4 2.4 0 1 0 -4.8 0M2203.1 1341.1a2.4 2.4 0 1 0 4.8 0a2.4 2.4 0 1 0 -4.8 0M2210.4 1341.9a2.4 2.4 0 1 0 4.8 0a2.4 2.4 0 1 0 -4.8 0M2217.7 1341.9a2.4 2.4 0 1 0 4.8 0a2.4 2.4 0 1 0 -4.8 0M2224.9 1342.2a2.4 2.4 0 1 0 4.8 0a2.4 2.4 0 1 0 -4.8 0M2232.2 1343.2a2.4 2.4 0 1 0 4.8 0a2.4 2.4 0 1 0 -4.8 0M2239.4 1341.4a2.4 2.4 0 1 0 4.8 0a2.4 2.4 0 1 0 -4.8 0M2246.7 1341.7a2.4 2.4 0 1 0 4.8 0a2.4 2.4 0 1 0 -4.8 0M2254.0 1341.6a2.4 2.4 0 1 0 4.8 0a2.4 2.4 0 1 0 -4.8 0M2261.2 1341.4a2.4 2.4 0 1 0 4.8 0a2.4 2.4 0 1 0 -4.8 0M2268.5 1341.6a2.4 2.4 0 1 0 4.8 0a2.4 2.4 0 1 0 -4.8 0M2275.7 1342.3a2.4 2.4 0 1 0 4.8 0a2.4 2.4 0 1 0 -4.8 0M2283.0 1343.0a2.4 2.4 0 1 0 4.8 0a2.4 2.4 0 1 0 -4.8 0M2290.3 1343.3a2.4 2.4 0 1 0 4.8 0a2.4 2.4 0 1 0 -4.8 0M2297.5 1342.9a2.4 2.4 0 1 0 4.8 0a2.4 2.4 0 1 0 -4.8 0M2304.8 1342.4a2.4 2.4 0 1 0 4.8 0a2.4 2.4 0 1 0 -4.8 0M2312.1 1342.3a2.4 2.4 0 1 0 4.8 0a2.4 2.4 0 1 0 -4.8 0M2319.3 1342.5a2.4 2.4 0 1 0 4.8 0a2.4 2.4 0 1 0 -4.8 0M2326.6 1342.6a2.4 2.4 0 1 0 4.8 0a2.4 2.4 0 1 0 -4.8 0M2333.8 1342.2a2.4 2.4 0 1 0 4.8 0a2.4 2.4 0 1 0 -4.8 0M2341.1 1341.4a2.4 2.4 0 1 0 4.8 0a2.4 2.4 0 1 0 -4.8 0M2348.4 1340.8a2.4 2.4 0 1 0 4.8 0a2.4 2.4 0 1 0 -4.8 0M2355.6 1340.8a2.4 2.4 0 1 0 4.8 0a2.4 2.4 0 1 0 -4.8 0M2362.9 1341.3a2.4 2.4 0 1 0 4.8 0a2.4 2.4 0 1 0 -4.8 0M2370.1 1341.7a2.4 2.4 0 1 0 4.8 0a2.4 2.4 0 1 0 -4.8 0M2377.4 1341.7a2.4 2.4 0 1 0 4.8 0a2.4 2.4 0 1 0 -4.8 0M2384.7 1341.5a2.4 2.4 0 1 0 4.8 0a2.4 2.4 0 1 0 -4.8 0M2391.9 1341.6a2.4 2.4 0 1 0 4.8 0a2.4 2.4 0 1 0 -4.8 0M2399.2 1342.2a2.4 2.4 0 1 0 4.8 0a2.4 2.4 0 1 0 -4.8 0M2406.4 1343.0a2.4 2.4 0 1 0 4.8 0a2.4 2.4 0 1 0 -4.8 0M2413.7 1343.3a2.4 2.4 0 1 0 4.8 0a2.4 2.4 0 1 0 -4.8 0M2421.0 1343.0a2.4 2.4 0 1 0 4.8 0a2.4 2.4 0 1 0 -4.8 0M2428.2 1342.5a2.4 2.4 0 1 0 4.8 0a2.4 2.4 0 1 0 -4.8 0M2435.5 1342.2a2.4 2.4 0 1 0 4.8 0a2.4 2.4 0 1 0 -4.8 0M2442.7 1342.4a2.4 2.4 0 1 0 4.8 0a2.4 2.4 0 1 0 -4.8 0M2450.0 1342.5a2.4 2.4 0 1 0 4.8 0a2.4 2.4 0 1 0 -4.8 0M2457.3 1342.2a2.4 2.4 0 1 0 4.8 0a2.4 2.4 0 1 0 -4.8 0M2464.5 1341.4a2.4 2.4 0 1 0 4.8 0a2.4 2.4 0 1 0 -4.8 0M2471.8 1340.8a2.4 2.4 0 1 0 4.8 0a2.4 2.4 0 1 0 -4.8 0M2479.0 1340.7a2.4 2.4 0 1 0 4.8 0a2.4 2.4 0 1 0 -4.8 0M2486.3 1341.2a2.4 2.4 0 1 0 4.8 0a2.4 2.4 0 1 0 -4.8 0M2493.6 1341.7a2.4 2.4 0 1 0 4.8 0a2.4 2.4 0 1 0 -4.8 0M2500.8 1341.8a2.4 2.4 0 1 0 4.8 0a2.4 2.4 0 1 0 -4.8 0M2508.1 1341.5a2.4 2.4 0 1 0 4.8 0a2.4 2.4 0 1 0 -4.8 0M2515.4 1341.6a2.4 2.4 0 1 0 4.8 0a2.4 2.4 0 1 0 -4.8 0M2522.6 1342.1a2.4 2.4 0 1 0 4.8 0a2.4 2.4 0 1 0 -4.8 0M2529.9 1342.9a2.4 2.4 0 1 0 4.8 0a2.4 2.4 0 1 0 -4.8 0M2537.1 1343.3a2.4 2.4 0 1 0 4.8 0a2.4 2.4 0 1 0 -4.8 0M2544.4 1343.1a2.4 2.4 0 1 0 4.8 0a2.4 2.4 0 1 0 -4.8 0M2551.7 1342.5a2.4 2.4 0 1 0 4.8 0a2.4 2.4 0 1 0 -4.8 0M2558.9 1342.2a2.4 2.4 0 1 0 4.8 0a2.4 2.4 0 1 0 -4.8 0M2566.2 1342.3a2.4 2.4 0 1 0 4.8 0a2.4 2.4 0 1 0 -4.8 0M2573.4 1342.5a2.4 2.4 0 1 0 4.8 0a2.4 2.4 0 1 0 -4.8 0M2580.7 1342.2a2.4 2.4 0 1 0 4.8 0a2.4 2.4 0 1 0 -4.8 0M2588.0 1341.5a2.4 2.4 0 1 0 4.8 0a2.4 2.4 0 1 0 -4.8 0M2595.2 1340.8a2.4 2.4 0 1 0 4.8 0a2.4 2.4 0 1 0 -4.8 0M2602.5 1340.7a2.4 2.4 0 1 0 4.8 0a2.4 2.4 0 1 0 -4.8 0M2609.7 1341.2a2.4 2.4 0 1 0 4.8 0a2.4 2.4 0 1 0 -4.8 0M2617.0 1341.7a2.4 2.4 0 1 0 4.8 0a2.4 2.4 0 1 0 -4.8 0M2624.3 1341.8a2.4 2.4 0 1 0 4.8 0a2.4 2.4 0 1 0 -4.8 0M2631.5 1341.6a2.4 2.4 0 1 0 4.8 0a2.4 2.4 0 1 0 -4.8 0M2638.8 1341.6a2.4 2.4 0 1 0 4.8 0a2.4 2.4 0 1 0 -4.8 0M2646.0 1342.1a2.4 2.4 0 1 0 4.8 0a2.4 2.4 0 1 0 -4.8 0M2653.3 1342.9a2.4 2.4 0 1 0 4.8 0a2.4 2.4 0 1 0 -4.8 0M2660.6 1343.3a2.4 2.4 0 1 0 4.8 0a2.4 2.4 0 1 0 -4.8 0M2667.8 1343.2a2.4 2.4 0 1 0 4.8 0a2.4 2.4 0 1 0 -4.8 0M2675.1 1342.6a2.4 2.4 0 1 0 4.8 0a2.4 2.4 0 1 0 -4.8 0M2682.3 1342.2a2.4 2.4 0 1 0 4.8 0a2.4 2.4 0 1 0 -4.8 0M2689.6 1342.2a2.4 2.4 0 1 0 4.8 0a2.4 2.4 0 1 0 -4.8 0M2696.9 1342.4a2.4 2.4 0 1 0 4.8 0a2.4 2.4 0 1 0 -4.8 0M2704.1 1342.2a2.4 2.4 0 1 0 4.8 0a2.4 2.4 0 1 0 -4.8 0M2711.4 1341.6a2.4 2.4 0 1 0 4.8 0a2.4 2.4 0 1 0 -4.8 0M2718.7 1340.9a2.4 2.4 0 1 0 4.8 0a2.4 2.4 0 1 0 -4.8 0M2725.9 1340.7a2.4 2.4 0 1 0 4.8 0a2.4 2.4 0 1 0 -4.8 0M2733.2 1341.1a2.4 2.4 0 1 0 4.8 0a2.4 2.4 0 1 0 -4.8 0M2740.4 1341.7a2.4 2.4 0 1 0 4.8 0a2.4 2.4 0 1 0 -4.8 0M2747.7 1341.9a2.4 2.4 0 1 0 4.8 0a2.4 2.4 0 1 0 -4.8 0M2755.0 1341.7a2.4 2.4 0 1 0 4.8 0a2.4 2.4 0 1 0 -4.8 0M2762.2 1341.6a2.4 2.4 0 1 0 4.8 0a2.4 2.4 0 1 0 -4.8 0M2769.5 1342.0a2.4 2.4 0 1 0 4.8 0a2.4 2.4 0 1 0 -4.8 0M2776.7 1342.8a2.4 2.4 0 1 0 4.8 0a2.4 2.4 0 1 0 -4.8 0M2784.0 1343.3a2.4 2.4 0 1 0 4.8 0a2.4 2.4 0 1 0 -4.8 0M2791.3 1343.2a2.4 2.4 0 1 0 4.8 0a2.4 2.4 0 1 0 -4.8 0M2798.5 1342.6a2.4 2.4 0 1 0 4.8 0a2.4 2.4 0 1 0 -4.8 0M2805.8 1342.2a2.4 2.4 0 1 0 4.8 0a2.4 2.4 0 1 0 -4.8 0M2813.0 1342.2a2.4 2.4 0 1 0 4.8 0a2.4 2.4 0 1 0 -4.8 0M2820.3 1342.4a2.4 2.4 0 1 0 4.8 0a2.4 2.4 0 1 0 -4.8 0M2827.6 1342.3a2.4 2.4 0 1 0 4.8 0a2.4 2.4 0 1 0 -4.8 0M2834.8 1341.6a2.4 2.4 0 1 0 4.8 0a2.4 2.4 0 1 0 -4.8 0M2842.1 1340.9a2.4 2.4 0 1 0 4.8 0a2.4 2.4 0 1 0 -4.8 0M2849.3 1340.6a2.4 2.4 0 1 0 4.8 0a2.4 2.4 0 1 0 -4.8 0M2856.6 1341.0a2.4 2.4 0 1 0 4.8 0a2.4 2.4 0 1 0 -4.8 0M2863.9 1341.6a2.4 2.4 0 1 0 4.8 0a2.4 2.4 0 1 0 -4.8 0M2871.1 1341.9a2.4 2.4 0 1 0 4.8 0a2.4 2.4 0 1 0 -4.8 0M2878.4 1341.8a2.4 2.4 0 1 0 4.8 0a2.4 2.4 0 1 0 -4.8 0M2885.6 1341.7a2.4 2.4 0 1 0 4.8 0a2.4 2.4 0 1 0 -4.8 0M2892.9 1342.0a2.4 2.4 0 1 0 4.8 0a2.4 2.4 0 1 0 -4.8 0M2900.2 1342.7a2.4 2.4 0 1 0 4.8 0a2.4 2.4 0 1 0 -4.8 0M2907.4 1343.3a2.4 2.4 0 1 0 4.8 0a2.4 2.4 0 1 0 -4.8 0M2914.7 1343.3a2.4 2.4 0 1 0 4.8 0a2.4 2.4 0 1 0 -4.8 0M2922.0 1342.7a2.4 2.4 0 1 0 4.8 0a2.4 2.4 0 1 0 -4.8 0M2929.2 1342.2a2.4 2.4 0 1 0 4.8 0a2.4 2.4 0 1 0 -4.8 0M2936.5 1342.1a2.4 2.4 0 1 0 4.8 0a2.4 2.4 0 1 0 -4.8 0M2943.7 1342.3a2.4 2.4 0 1 0 4.8 0a2.4 2.4 0 1 0 -4.8 0M2951.0 1342.2a2.4 2.4 0 1 0 4.8 0a2.4 2.4 0 1 0 -4.8 0M2958.3 1341.7a2.4 2.4 0 1 0 4.8 0a2.4 2.4 0 1 0 -4.8 0M2965.5 1341.0a2.4 2.4 0 1 0 4.8 0a2.4 2.4 0 1 0 -4.8 0M2972.8 1340.6a2.4 2.4 0 1 0 4.8 0a2.4 2.4 0 1 0 -4.8 0M2980.0 1340.9a2.4 2.4 0 1 0 4.8 0a2.4 2.4 0 1 0 -4.8 0M2987.3 1341.6a2.4 2.4 0 1 0 4.8 0a2.4 2.4 0 1 0 -4.8 0M2994.6 1341.9a2.4 2.4 0 1 0 4.8 0a2.4 2.4 0 1 0 -4.8 0M3001.8 1341.9a2.4 2.4 0 1 0 4.8 0a2.4 2.4 0 1 0 -4.8 0M3009.1 1341.7a2.4 2.4 0 1 0 4.8 0a2.4 2.4 0 1 0 -4.8 0" fill="#000"/>
<text x="1152" y="1096.9" text-anchor="end" font-size="21" textLength="37" lengthAdjust="spacingAndGlyphs">0.82</text>
<text x="1152" y="1147.5" text-anchor="end" font-size="21" textLength="37" lengthAdjust="spacingAndGlyphs">0.64</text>
<text x="1152" y="1198.1" text-anchor="end" font-size="21" textLength="37" lengthAdjust="spacingAndGlyphs">0.45</text>
<text x="1152" y="1248.7" text-anchor="end" font-size="21" textLength="37" lengthAdjust="spacingAndGlyphs">0.27</text>
<text x="1152" y="1299.3" text-anchor="end" font-size="21" textLength="37" lengthAdjust="spacingAndGlyphs">0.09</text>
<text x="1152" y="1349.7" text-anchor="end" font-size="21" textLength="46" lengthAdjust="spacingAndGlyphs">-0.09</text>
<text x="1152" y="1400.2" text-anchor="end" font-size="21" textLength="46" lengthAdjust="spacingAndGlyphs">-0.27</text>
<text x="1152" y="1450.8" text-anchor="end" font-size="21" textLength="46" lengthAdjust="spacingAndGlyphs">-0.45</text>
<text x="1152" y="1501.5" text-anchor="end" font-size="21" textLength="46" lengthAdjust="spacingAndGlyphs">-0.64</text>
<text x="1152" y="1552.2" text-anchor="end" font-size="21" textLength="46" lengthAdjust="spacingAndGlyphs">-0.82</text>
<text x="1152" y="1602.5" text-anchor="end" font-size="21">-1</text>
<text x="1160.0" y="1623" text-anchor="middle" font-size="21" textLength="11" lengthAdjust="spacingAndGlyphs">0</text>
<text x="1328.3" y="1623" text-anchor="middle" font-size="21" textLength="33" lengthAdjust="spacingAndGlyphs">525</text>
<text x="1496.6" y="1623" text-anchor="middle" font-size="21" textLength="44" lengthAdjust="spacingAndGlyphs">1051</text>
<text x="1664.9" y="1623" text-anchor="middle" font-size="21" textLength="44" lengthAdjust="spacingAndGlyphs">1576</text>
<text x="1833.2" y="1623" text-anchor="middle" font-size="21" textLength="44" lengthAdjust="spacingAndGlyphs">2102</text>
<text x="2001.5" y="1623" text-anchor="middle" font-size="21" textLength="44" lengthAdjust="spacingAndGlyphs">2628</text>
<text x="2169.8" y="1623" text-anchor="middle" font-size="21" textLength="44" lengthAdjust="spacingAndGlyphs">3153</text>
<text x="2338.1" y="1623" text-anchor="middle" font-size="21" textLength="44" lengthAdjust="spacingAndGlyphs">3679</text>
<text x="2506.4" y="1623" text-anchor="middle" font-size="21" textLength="44" lengthAdjust="spacingAndGlyphs">4205</text>
<text x="2674.7" y="1623" text-anchor="middle" font-size="21" textLength="44" lengthAdjust="spacingAndGlyphs">4730</text>
<text x="2843.0" y="1623" text-anchor="middle" font-size="21" textLength="44" lengthAdjust="spacingAndGlyphs">5256</text>
<text x="3011.3" y="1623" text-anchor="middle" font-size="21" textLength="44" lengthAdjust="spacingAndGlyphs">5782</text>
<text x="1168" y="1066" font-size="21">A</text>
<text x="3062" y="1623" font-size="21" textLength="39" lengthAdjust="spacingAndGlyphs">S/us</text>
</svg><div class="a" style="left:3143px;top:1003px;width:33px;height:623px;background:#f0f0f0"></div><div class="a" style="left:1087px;top:1626px;width:2089px;height:33px;background:#f0f0f0"></div><svg class="a" style="left:3153px;top:1016px" width="14" height="10" viewBox="0 0 14 10"><path d="M1.5 8.5 L7 2.5 L12.5 8.5" fill="none" stroke="#b4b4b4" stroke-width="2.2"/></svg><svg class="a" style="left:3153px;top:1604px" width="14" height="10" viewBox="0 0 14 10"><path d="M1.5 1.5 L7 7.5 L12.5 1.5" fill="none" stroke="#b4b4b4" stroke-width="2.2"/></svg><svg class="a" style="left:1098px;top:1635px" width="10" height="14" viewBox="0 0 10 14"><path d="M8.5 1.5 L2.5 7 L8.5 12.5" fill="none" stroke="#b4b4b4" stroke-width="2.2"/></svg><svg class="a" style="left:3119px;top:1635px" width="10" height="14" viewBox="0 0 10 14"><path d="M1.5 1.5 L7.5 7 L1.5 12.5" fill="none" stroke="#b4b4b4" stroke-width="2.2"/></svg><div class="t" style="left:38.9px;top:11.7px;font-size:24px;transform:scaleX(0.938)">DAFFViewer</div>
<div class="t" style="left:6.8px;top:54.3px;font-size:25px;transform:scaleX(0.955)">File</div>
<div class="t" style="left:59.6px;top:54.3px;font-size:25px;transform:scaleX(0.960)">Edit</div>
<div class="t" style="left:116.4px;top:54.3px;font-size:25px;transform:scaleX(0.983)">Content</div>
<div class="t" style="left:218.6px;top:54.3px;font-size:25px;transform:scaleX(0.953)">Settings</div>
<div class="t" style="left:321.4px;top:54.3px;font-size:25px;transform:scaleX(0.983)">About</div>
<div class="t" style="left:22.2px;top:100.1px;font-size:27px;transform:scaleX(0.904)">DAFF Reader</div>
<div class="t" style="left:21.4px;top:343.1px;font-size:27px;transform:scaleX(0.959)">DAFF Metadata</div>
<div class="t" style="left:20.7px;top:789.9px;font-size:27px;transform:scaleX(0.940)">DAFF Properties</div>
<div class="t" style="left:20.7px;top:1237.3px;font-size:27px;transform:scaleX(0.936)">DAFF Content</div>
<div class="t" style="left:31.6px;top:162.1px;font-size:27px;transform:scaleX(0.965)">File name</div>
<div class="t" style="left:32.6px;top:219.4px;font-size:27px;transform:scaleX(0.959)">Version</div>
<div class="t" style="left:31.6px;top:276.9px;font-size:27px;transform:scaleX(1.005)">Content type</div>
<div class="t" style="left:198.9px;top:218.6px;font-size:28px;color:#7a7a7a;transform:scaleX(1.053)">170</div>
<div class="t" style="left:198.9px;top:276.1px;font-size:28px;color:#7a7a7a;transform:scaleX(1.048)">Impulse response</div>
<div class="t" style="left:125.4px;top:395.1px;font-size:27px;font-weight:700;transform:scaleX(0.978)">Name</div>
<div class="t" style="left:703.7px;top:395.1px;font-size:27px;font-weight:700;transform:scaleX(0.932)">Value</div>
<div class="t" style="left:26.4px;top:444.1px;font-size:27px;font-weight:700;transform:scaleX(0.854)">CONVERTER</div>
<div class="t" style="left:303.4px;top:444.1px;font-size:27px;transform:scaleX(0.964)">Converted from DAFF version 1.5</div>
<div class="t" style="left:26.4px;top:504.1px;font-size:27px;font-weight:700;transform:scaleX(0.885)">DATE OF CONVERSION</div>
<div class="t" style="left:303.4px;top:504.1px;font-size:27px;transform:scaleX(0.971)">22-Jun-2016</div>
<div class="t" style="left:26.4px;top:563.8px;font-size:27px;font-weight:700;transform:scaleX(0.860)">DELAY_SAMPLES</div>
<div class="t" style="left:303.4px;top:563.8px;font-size:27px;transform:scaleX(1.046)">0</div>
<div class="t" style="left:27.3px;top:624.1px;font-size:27px;font-weight:700;transform:scaleX(0.858)">SESSION</div>
<div class="t" style="left:135.6px;top:842.1px;font-size:27px;font-weight:700;transform:scaleX(0.978)">Name</div>
<div class="t" style="left:637.5px;top:842.1px;font-size:27px;font-weight:700;transform:scaleX(0.932)">Value</div>
<div class="t" style="left:26.3px;top:891.7px;font-size:27px;font-weight:700;transform:scaleX(0.955)">Number of channels</div>
<div class="t" style="left:322.1px;top:891.7px;font-size:27px;transform:scaleX(1.085)">2</div>
<div class="t" style="left:26.3px;top:951.5px;font-size:27px;font-weight:700;transform:scaleX(0.956)">Number of records</div>
<div class="t" style="left:322.2px;top:951.5px;font-size:27px">7082</div>
<div class="t" style="left:26.3px;top:1011.3px;font-size:27px;font-weight:700;transform:scaleX(0.976)">Quantization</div>
<div class="t" style="left:321.2px;top:1011.3px;font-size:27px;transform:scaleX(1.008)">16-bit signed integer</div>
<div class="t" style="left:27.3px;top:1071.1px;font-size:27px;font-weight:700;transform:scaleX(0.949)">Alpha points</div>
<div class="t" style="left:321.1px;top:1071.1px;font-size:27px;transform:scaleX(1.047)">120</div>
<div class="t" style="left:27.3px;top:1130.9px;font-size:27px;font-weight:700;transform:scaleX(0.955)">Alpha resolution</div>
<div class="t" style="left:322.2px;top:1130.9px;font-size:27px;transform:scaleX(1.033)">3°</div>
<div class="t" style="left:183.5px;top:1289.1px;font-size:27px;font-weight:700;transform:scaleX(0.976)">Name</div>
<div class="t" style="left:702.4px;top:1289.1px;font-size:27px;font-weight:700;transform:scaleX(0.939)">Value</div>
<div class="t" style="left:26.3px;top:1338.3px;font-size:27px;font-weight:700;transform:scaleX(0.959)">Filter length</div>
<div class="t" style="left:418.7px;top:1338.3px;font-size:27px;transform:scaleX(1.013)">256</div>
<div class="t" style="left:26.3px;top:1398.1px;font-size:27px;font-weight:700;transform:scaleX(0.974)">Maximum effective filter length</div>
<div class="t" style="left:418.7px;top:1398.1px;font-size:27px;transform:scaleX(1.013)">256</div>
<div class="t" style="left:26.3px;top:1457.9px;font-size:27px;font-weight:700;transform:scaleX(0.975)">Minimum effective filter offset</div>
<div class="t" style="left:418.6px;top:1457.9px;font-size:27px;transform:scaleX(1.054)">0</div>
<div class="t" style="left:26.4px;top:1517.7px;font-size:27px;font-weight:700;transform:scaleX(0.947)">Overall peak value</div>
<div class="t" style="left:417.7px;top:1517.7px;font-size:27px">1.00003</div>
<div class="t" style="left:27.3px;top:1577.4px;font-size:27px;font-weight:700;transform:scaleX(0.928)">Sampling rate</div>
<div class="t" style="left:419.7px;top:1577.4px;font-size:27px;transform:scaleX(0.954)">44100 Hz</div>
<div class="t" style="left:1093.5px;top:789.1px;font-size:27px;transform:scaleX(0.967)">User view</div>
<div class="t" style="left:1094.3px;top:857.1px;font-size:27px;transform:scaleX(0.963)">Phi</div>
<div class="t" style="left:1096.2px;top:921.4px;font-size:27px;transform:scaleX(0.925)">Theta</div>
<div class="t" style="left:1467.5px;top:856.5px;font-size:27px;transform:scaleX(1.008)">0,0</div>
<div class="t" style="left:1467.5px;top:920.5px;font-size:27px;transform:scaleX(1.008)">0,0</div>
<div class="t" style="left:1794.8px;top:789.1px;font-size:27px;transform:scaleX(0.979)">Data view</div>
<div class="t" style="left:1796.8px;top:840.9px;font-size:27px;transform:scaleX(0.949)">Alpha</div>
<div class="t" style="left:1794.9px;top:890.1px;font-size:27px;transform:scaleX(0.948)">Beta</div>
<div class="t" style="left:1794.9px;top:938.7px;font-size:27px;transform:scaleX(0.974)">Index</div>
<div class="t" style="left:2163.2px;top:840.3px;font-size:27px;transform:scaleX(1.101)">0,0</div>
<div class="t" style="left:2147.3px;top:890.1px;font-size:27px;transform:scaleX(1.088)">90,0</div>
<div class="t" style="left:2139.4px;top:938.7px;font-size:27px;transform:scaleX(1.059)">3481</div>
<div class="t" style="left:2495.9px;top:789.1px;font-size:27px;transform:scaleX(0.917)">Samples</div>
<div class="t" style="left:2496.0px;top:840.9px;font-size:27px;transform:scaleX(0.956)">Channel</div>
<div class="t" style="left:2495.0px;top:890.1px;font-size:27px;transform:scaleX(0.984)">Index</div>
<div class="t" style="left:2496.1px;top:938.7px;font-size:27px;transform:scaleX(0.946)">Sample pos</div>
<div class="t" style="left:3114.1px;top:840.1px;font-size:27px;transform:scaleX(1.177)">0</div>
<div class="t" style="left:3114.1px;top:890.1px;font-size:27px;transform:scaleX(1.177)">0</div>
<div class="t" style="left:2640.5px;top:938.7px;font-size:27px;transform:scaleX(1.040)">0 us</div><div class="a" style="left:0px;top:1720px;width:3200px;height:4px;background:#151515"></div>
</body></html>
